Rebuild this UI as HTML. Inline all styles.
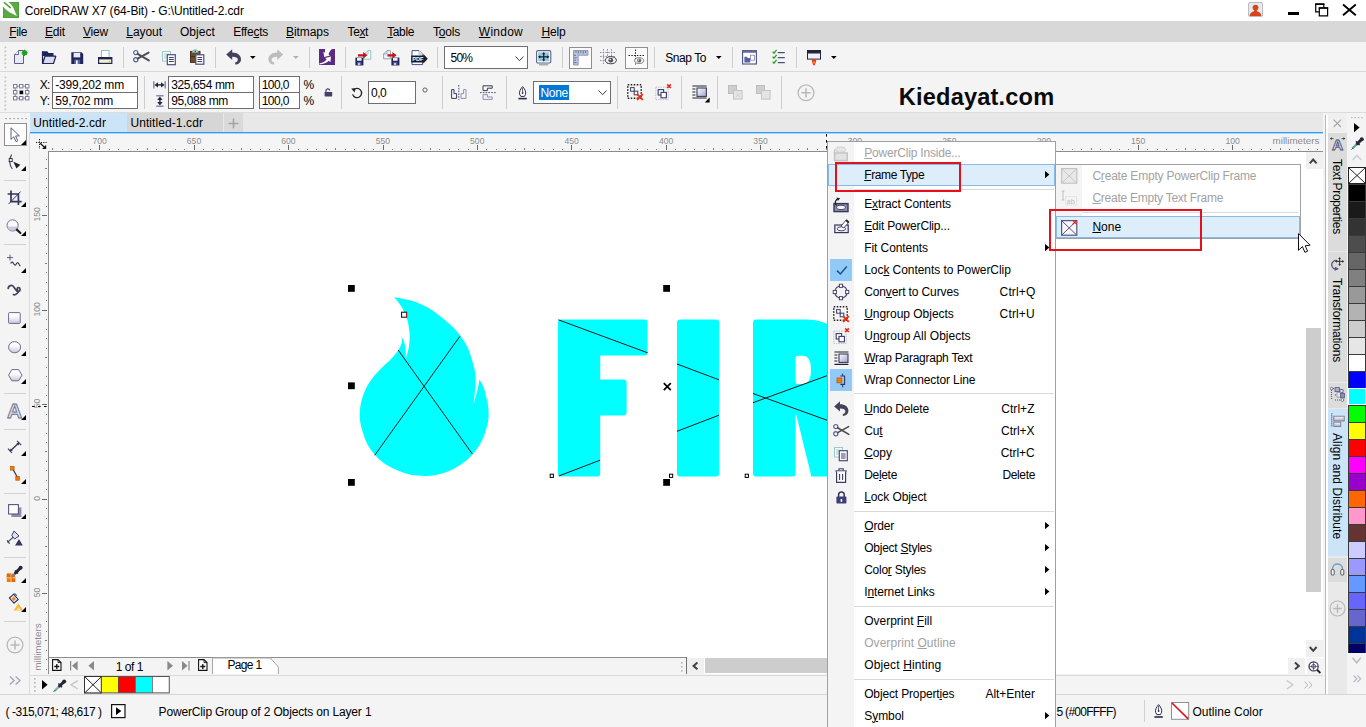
<!DOCTYPE html>
<html><head><meta charset="utf-8"><title>CorelDRAW X7 (64-Bit) - G:\Untitled-2.cdr</title>
<style>
*{box-sizing:border-box;margin:0;padding:0}
html,body{width:1366px;height:727px;overflow:hidden;background:#f4f4f4}
body{font-family:"Liberation Sans",sans-serif;font-size:12px;color:#000;position:relative}
.a{position:absolute;display:block}
.t{position:absolute;white-space:nowrap;line-height:1;display:block}
u{text-decoration:underline;text-underline-offset:1px;text-decoration-thickness:1px}
svg{overflow:visible}
</style></head><body>
<!-- sec_top -->
<div class="a" style="left:0px;top:0px;width:1366px;height:21px;background:#ffffff;"></div>
<svg class="a" style="left:3px;top:2px;" width="16" height="16" viewBox="0 0 16 16"><rect width="16" height="16" fill="#5ca843"/><rect x="0.4" y="0.4" width="15.2" height="15.2" fill="none" stroke="#49a035" stroke-width="0.8"/><path d="M0 0 H5.2 C8 1.6 10.4 5 11.5 8.5 L13.9 13.9 L9 11.6 C5.5 10 2.5 7.6 0 4.6 Z" fill="#fff"/><path d="M1.4 0.6 L7.3 5.6" stroke="#4fa338" stroke-width="1.5" stroke-linecap="round"/></svg>
<span class="t" style="left:24.70px;top:5.00px;font-size:12px;color:#000;letter-spacing:-0.110px;">CorelDRAW X7 (64-Bit) - G:\Untitled-2.cdr</span>
<svg class="a" style="left:1248px;top:2px;" width="15" height="15" viewBox="0 0 15 15"><rect x="0.5" y="0.5" width="14" height="14" rx="1.5" fill="#e9e9ec" stroke="#b9bcc4"/><circle cx="7.5" cy="5.6" r="2.9" fill="#d9451a"/><path d="M1.6 14 C2 10.3 4.6 9.6 6 9.2 L6.3 8 L8.7 8 L9 9.2 C10.4 9.6 13 10.3 13.4 14 Z" fill="#d9451a"/></svg>
<div class="a" style="left:1288px;top:12px;width:11px;height:3px;background:#000;"></div>
<svg class="a" style="left:1314px;top:2px;" width="16" height="16" viewBox="0 0 16 16"><path d="M1.7 2.2 H9.8 V9.8 H1.7 Z" fill="#fff" stroke="#000" stroke-width="1.2"/><rect x="1.1" y="1.4" width="9.3" height="1.6" fill="#000"/><path d="M5.3 6 H13.6 V13.8 H5.3 Z" fill="#fff" stroke="#000" stroke-width="1.2"/><rect x="4.7" y="5.2" width="9.5" height="1.6" fill="#000"/></svg>
<svg class="a" style="left:1341px;top:3px;" width="16" height="14" viewBox="0 0 16 14"><path d="M2 1.5 L14.8 12.2 M14.8 1.5 L2 12.2" stroke="#000" stroke-width="1.9" fill="none"/></svg>
<div class="a" style="left:0px;top:21px;width:1366px;height:21px;background:#d8d8d8;"></div>
<span class="t" style="left:9.20px;top:26.00px;font-size:12px;color:#000;letter-spacing:-0.384px;"><u>F</u>ile</span>
<span class="t" style="left:45.00px;top:26.00px;font-size:12px;color:#000;letter-spacing:-0.220px;"><u>E</u>dit</span>
<span class="t" style="left:83.00px;top:26.00px;font-size:12px;color:#000;letter-spacing:-0.199px;"><u>V</u>iew</span>
<span class="t" style="left:126.30px;top:26.00px;font-size:12px;color:#000;letter-spacing:-0.055px;"><u>L</u>ayout</span>
<span class="t" style="left:180.00px;top:26.00px;font-size:12px;color:#000;letter-spacing:0.020px;">Ob<u>j</u>ect</span>
<span class="t" style="left:233.20px;top:26.00px;font-size:12px;color:#000;letter-spacing:-0.238px;">Effe<u>c</u>ts</span>
<span class="t" style="left:286.00px;top:26.00px;font-size:12px;color:#000;letter-spacing:-0.078px;"><u>B</u>itmaps</span>
<span class="t" style="left:347.60px;top:26.00px;font-size:12px;color:#000;letter-spacing:-0.427px;">Te<u>x</u>t</span>
<span class="t" style="left:387.20px;top:26.00px;font-size:12px;color:#000;letter-spacing:-0.378px;"><u>T</u>able</span>
<span class="t" style="left:433.00px;top:26.00px;font-size:12px;color:#000;letter-spacing:-0.203px;">T<u>o</u>ols</span>
<span class="t" style="left:478.80px;top:26.00px;font-size:12px;color:#000;letter-spacing:0.253px;"><u>W</u>indow</span>
<span class="t" style="left:541.40px;top:26.00px;font-size:12px;color:#000;letter-spacing:-0.145px;"><u>H</u>elp</span>
<!-- sec_bars -->
<div class="a" style="left:0px;top:42px;width:1366px;height:29px;background:#f4f4f4;"></div>
<svg class="a" style="left:4px;top:46px;" width="3" height="23" viewBox="0 0 3 23"><rect x="0.6" y="0.6" width="1.6" height="1.6" fill="#bdbdbd"/><rect x="0" y="0" width="1" height="1" fill="#e6e6e6"/><rect x="0.6" y="4.6" width="1.6" height="1.6" fill="#bdbdbd"/><rect x="0" y="4" width="1" height="1" fill="#e6e6e6"/><rect x="0.6" y="8.6" width="1.6" height="1.6" fill="#bdbdbd"/><rect x="0" y="8" width="1" height="1" fill="#e6e6e6"/><rect x="0.6" y="12.6" width="1.6" height="1.6" fill="#bdbdbd"/><rect x="0" y="12" width="1" height="1" fill="#e6e6e6"/><rect x="0.6" y="16.6" width="1.6" height="1.6" fill="#bdbdbd"/><rect x="0" y="16" width="1" height="1" fill="#e6e6e6"/><rect x="0.6" y="20.6" width="1.6" height="1.6" fill="#bdbdbd"/><rect x="0" y="20" width="1" height="1" fill="#e6e6e6"/></svg>
<svg class="a" style="left:13px;top:49px;" width="16" height="16" viewBox="0 0 16 16"><path d="M1.5 5.5 L5.5 1.5 H10.5 V14.5 H1.5 Z" fill="#e9ebf4" stroke="#5d5f8a" stroke-width="1"/><path d="M1.5 5.5 H5.5 V1.5" fill="#fff" stroke="#4a4d78" stroke-width="0.8"/><circle cx="11.6" cy="3.8" r="2.5" fill="#19a319"/><path d="M11.6 0.6 V7 M8.4 3.8 H14.8 M9.4 1.6 L13.8 6 M13.8 1.6 L9.4 6" stroke="#19a319" stroke-width="1"/></svg>
<svg class="a" style="left:42px;top:50px;" width="15" height="15" viewBox="0 0 15 15"><path d="M0.5 1.2 H5.2 L6.6 3 H11.5 V6 H0.5 Z" fill="#1f2459"/><path d="M0.5 1.2 V13.5 H11.5 L13.8 6.2 H3 L0.8 13" fill="#d9dcec" stroke="#1f2459" stroke-width="1.2" stroke-linejoin="round"/></svg>
<svg class="a" style="left:71px;top:52px;" width="13" height="13" viewBox="0 0 13 13"><path d="M0.3 0.3 H10.6 L12.2 1.9 V12 H0.3 Z" fill="#1f2459"/><rect x="2.6" y="0.9" width="6.6" height="4.5" fill="#e8eaf6"/><rect x="3.2" y="7.6" width="6" height="4.4" fill="#5d63a0"/><rect x="5" y="8.4" width="1.6" height="3.6" fill="#fff"/></svg>
<svg class="a" style="left:98px;top:50px;" width="15" height="15" viewBox="0 0 15 15"><rect x="3.5" y="0.5" width="7.6" height="7" fill="#fff" stroke="#8cc0bd"/><rect x="0.6" y="7.6" width="13.2" height="5.8" fill="#f4f2c9" stroke="#1f2459" stroke-width="1.2"/><rect x="0.6" y="7.2" width="13.2" height="2.2" fill="#1f2459"/><rect x="10.6" y="11" width="1.4" height="1" fill="#e5b800"/></svg>
<div class="a" style="left:123px;top:47px;width:1px;height:21px;background:#cdcdcd;"></div>
<svg class="a" style="left:133px;top:50px;" width="17" height="14" viewBox="0 0 17 14"><circle cx="2.8" cy="2.6" r="2.1" fill="none" stroke="#5a5f98" stroke-width="1.2"/><circle cx="2.8" cy="9.8" r="2.1" fill="none" stroke="#5a5f98" stroke-width="1.2"/><path d="M4.6 3.8 L15.8 10.4 M4.6 8.6 L15.6 2.6" stroke="#4f4f55" stroke-width="2" stroke-linecap="round"/></svg>
<svg class="a" style="left:162px;top:51px;" width="15" height="15" viewBox="0 0 15 15"><rect x="0.5" y="0.5" width="8" height="9.6" fill="#f4fbfa" stroke="#9ccbc6"/><path d="M2 3 H7 M2 5 H7 M2 7 H5" stroke="#9ccbc6" stroke-width="0.9"/><rect x="5.3" y="3.7" width="8" height="10" fill="#fff" stroke="#4d4f7e" stroke-width="1.2"/><path d="M7 6.5 H11.8 M7 8.5 H11.8 M7 10.5 H11.8" stroke="#3b3d66" stroke-width="1"/></svg>
<svg class="a" style="left:190px;top:49px;" width="15" height="16" viewBox="0 0 15 16"><rect x="0.5" y="2.4" width="9.5" height="11" fill="#6b4a2e" stroke="#4a321e"/><rect x="0.5" y="7" width="9.5" height="1" fill="#4a321e"/><path d="M2.2 3.4 C2.2 0 8.2 0 8.2 3.4 Z" fill="#bfe3df" stroke="#5aa8a0" stroke-width="0.8"/><circle cx="5.2" cy="2.2" r="0.7" fill="#333"/><rect x="5.8" y="5.8" width="8" height="9.4" fill="#fff" stroke="#4d4f7e" stroke-width="1.2"/><path d="M7.5 8.5 H12.2 M7.5 10.5 H12.2 M7.5 12.5 H12.2" stroke="#3b3d66" stroke-width="1"/></svg>
<div class="a" style="left:215px;top:47px;width:1px;height:21px;background:#cdcdcd;"></div>
<svg class="a" style="left:225.5px;top:48.6px;" width="16" height="16" viewBox="0 0 16 16"><path d="M0.2 5.6 L6.2 0.2 V3.4 C11.5 3.4 15 6.2 15 10.2 C15 13.4 12.5 15.4 9.2 15.6 V13.6 C11 13.2 11.8 12 11.8 10.6 C11.8 8.6 10 7.8 6.2 7.8 V11 Z" fill="#46415a"/></svg>
<svg class="a" style="left:249.6px;top:56.2px;" width="5.6" height="3" viewBox="0 0 5.6 3"><path d="M0 0 H5.6 L2.8 3 Z" fill="#000"/></svg>
<svg class="a" style="left:268px;top:48.6px;" width="16" height="16" viewBox="0 0 16 16"><g transform="translate(15.4,0) scale(-1,1)"><path d="M0.2 5.6 L6.2 0.2 V3.4 C11.5 3.4 15 6.2 15 10.2 C15 13.4 12.5 15.4 9.2 15.6 V13.6 C11 13.2 11.8 12 11.8 10.6 C11.8 8.6 10 7.8 6.2 7.8 V11 Z" fill="#bdbdbd"/></g></svg>
<svg class="a" style="left:293px;top:56.2px;" width="5.6" height="3" viewBox="0 0 5.6 3"><path d="M0 0 H5.6 L2.8 3 Z" fill="#b0b0b0"/></svg>
<div class="a" style="left:309px;top:47px;width:1px;height:21px;background:#cdcdcd;"></div>
<svg class="a" style="left:319px;top:49px;" width="16" height="16" viewBox="0 0 16 16"><rect width="16" height="16" fill="#5b2b82"/><path d="M6.2 0 H13 C10.6 2.2 9.8 3.8 9.6 5.4 L11 6.6 L5.2 8 L4.4 2.6 L6 3.8 C6 2.4 6 1.2 6.2 0 Z" fill="#fff"/><path d="M0.4 14.4 C4 13.6 6.2 12.2 7.6 10.4 L6.2 9 L12 7.4 L11.4 13.2 L9.8 11.8 C7.6 14 4.4 15.2 0.4 15.6 Z" fill="#fff"/></svg>
<div class="a" style="left:345px;top:47px;width:1px;height:21px;background:#cdcdcd;"></div>
<svg class="a" style="left:354.5px;top:49.5px;" width="17" height="16" viewBox="0 0 17 16"><path d="M9.2 4.2 L13 0.6 H15.8 V9.2 H9.2 Z" fill="#f3faf9" stroke="#8dbdb9" stroke-width="0.9"/><path d="M9.2 4.2 H13 V0.6" fill="none" stroke="#8dbdb9" stroke-width="0.8"/><rect x="0.4" y="7.6" width="8" height="7.8" fill="#1f2459"/><rect x="2" y="8" width="4.6" height="2.8" fill="#e8eaf6"/><rect x="2.2" y="12.2" width="4.2" height="3.2" fill="#5d63a0"/><rect x="3.4" y="12.8" width="1.2" height="2.4" fill="#fff"/><path d="M3 4.2 H8.2 V2 L12.4 5.3 L8.2 8.6 V6.4 H3 Z" fill="#c4111a"/></svg>
<svg class="a" style="left:382.5px;top:49.5px;" width="17" height="16" viewBox="0 0 17 16"><path d="M0.6 4 L4 0.6 H7.4 V8.8 H0.6 Z" fill="#eef4f8" stroke="#8f97ad" stroke-width="0.9"/><path d="M0.6 4 H4 V0.6" fill="none" stroke="#8f97ad" stroke-width="0.8"/><rect x="8.4" y="7.6" width="8" height="7.8" fill="#1f2459"/><rect x="10" y="8" width="4.6" height="2.8" fill="#e8eaf6"/><rect x="10.2" y="12.2" width="4.2" height="3.2" fill="#5d63a0"/><rect x="11.4" y="12.8" width="1.2" height="2.4" fill="#fff"/><path d="M4.4 4.2 H9.4 V2 L13.6 5.3 L9.4 8.6 V6.4 H4.4 Z" fill="#c4111a"/></svg>
<svg class="a" style="left:410.5px;top:49.5px;" width="17" height="16" viewBox="0 0 17 16"><path d="M1 0.6 H8 L11.6 4.2 V14.6 H1 Z" fill="#fff" stroke="#4d4f7e" stroke-width="1"/><path d="M8 0.6 V4.2 H11.6" fill="#dff1ef" stroke="#8dbdb9" stroke-width="0.8"/><path d="M0.2 5.6 H12.4 V4 L16.8 8.8 L12.4 13.6 V12.4 H0.2 Z" fill="#1c1b2e"/><text x="1.2" y="11.2" font-family="Liberation Sans,sans-serif" font-size="6.2" font-weight="bold" fill="#fff" textLength="11.4" lengthAdjust="spacingAndGlyphs">PDF</text></svg>
<div class="a" style="left:437px;top:47px;width:1px;height:21px;background:#cdcdcd;"></div>
<div class="a" style="left:444px;top:46px;width:84px;height:23px;background:#fff;border:1px solid #6e6e6e;"></div>
<span class="t" style="left:450.60px;top:52.00px;font-size:12px;color:#000;letter-spacing:-0.806px;">50%</span>
<svg class="a" style="left:514.6px;top:55.6px;" width="9" height="5.4" viewBox="0 0 9 5.4"><path d="M0.5 0.5 L4.5 4.7 L8.5 0.5" fill="none" stroke="#404040" stroke-width="1"/></svg>
<svg class="a" style="left:536px;top:49.5px;" width="16" height="16" viewBox="0 0 16 16"><rect x="0.6" y="0.6" width="14.2" height="12.4" rx="1.4" fill="#fff" stroke="#5d5f8a" stroke-width="1.1"/><rect x="2.2" y="2.4" width="11" height="8.8" fill="#8ecbd6"/><path d="M7.7 3 V10.6 M3 6.8 H12.4" stroke="#1a1a2e" stroke-width="1.2"/><path d="M7.7 2 L9.3 4.2 H6.1 Z M7.7 11.6 L9.3 9.4 H6.1 Z M2 6.8 L4.2 5.2 V8.4 Z M13.4 6.8 L11.2 5.2 V8.4 Z" fill="#1a1a2e"/><path d="M3 14.8 H12.2" stroke="#8d8fb0" stroke-width="1.1"/></svg>
<div class="a" style="left:562px;top:47px;width:1px;height:21px;background:#cdcdcd;"></div>
<div class="a" style="left:569px;top:47px;width:23px;height:22px;background:#fcfcfc;border:1px solid #8f8f8f;"></div>
<svg class="a" style="left:573px;top:49.5px;" width="16" height="16" viewBox="0 0 16 16"><path d="M0.5 0.5 H15 V5.2 H5.2 V15 H0.5 Z" fill="#b9c2de" stroke="#8a93b5" stroke-width="0.9"/><path d="M3 1 V3 M5.4 1 V3.6 M7.8 1 V3 M10.2 1 V3.6 M12.6 1 V3 M1 5.4 H3 M1 7.8 H3.6 M1 10.2 H3 M1 12.6 H3.6" stroke="#5d668c" stroke-width="0.8"/></svg>
<svg class="a" style="left:600px;top:49px;" width="17" height="17" viewBox="0 0 17 17"><path d="M3.5 0 V15 M7.5 0 V15 M11.5 0 V15 M0 3.5 H15 M0 7.5 H15 M0 11.5 H15" stroke="#8088b8" stroke-width="0.9" stroke-dasharray="1.6 1.1"/><ellipse cx="10.8" cy="11.2" rx="5.6" ry="3.6" fill="#f4f4f4" stroke="#3d3d3d" stroke-width="1"/><circle cx="10.8" cy="11.2" r="2.4" fill="#555"/><circle cx="10.2" cy="10.5" r="0.8" fill="#eee"/></svg>
<div class="a" style="left:625px;top:47px;width:23px;height:22px;background:#fcfcfc;border:1px solid #8f8f8f;"></div>
<svg class="a" style="left:628px;top:49px;" width="18" height="17" viewBox="0 0 18 17"><path d="M7.5 0.5 V15.5" stroke="#222" stroke-width="1" stroke-dasharray="1.5 1.3"/><path d="M0.5 6.5 H16" stroke="#222" stroke-width="1" stroke-dasharray="1.5 1.3"/><ellipse cx="11.2" cy="11.6" rx="4.6" ry="2.9" fill="#eee" stroke="#777" stroke-width="0.9"/><circle cx="11.2" cy="11.6" r="2" fill="#666"/><circle cx="10.7" cy="11" r="0.7" fill="#eee"/></svg>
<div class="a" style="left:654px;top:47px;width:1px;height:21px;background:#cdcdcd;"></div>
<span class="t" style="left:665.30px;top:52.00px;font-size:12px;color:#000;letter-spacing:-0.445px;">Snap To</span>
<svg class="a" style="left:715.8px;top:56.2px;" width="5.6" height="3" viewBox="0 0 5.6 3"><path d="M0 0 H5.6 L2.8 3 Z" fill="#000"/></svg>
<div class="a" style="left:732px;top:47px;width:1px;height:21px;background:#cdcdcd;"></div>
<svg class="a" style="left:742px;top:50px;" width="15" height="15" viewBox="0 0 15 15"><rect x="0.6" y="0.6" width="13.8" height="13.4" fill="#fff" stroke="#4d4f7e" stroke-width="1.1"/><rect x="0.6" y="0.6" width="13.8" height="2.2" fill="#6b6d98"/><path d="M2.4 12.4 V6.8 L5 6.8 L5.6 8 H8.2 V12.4 Z" fill="#5a5fa3"/><rect x="8.6" y="5.2" width="3.8" height="5" fill="#fff" stroke="#7d81b0" stroke-width="0.8"/></svg>
<svg class="a" style="left:771.5px;top:48.5px;" width="14" height="16" viewBox="0 0 14 16"><path d="M0.6 2.6 L2 4.2 L4.6 0.8 M0.6 7.6 L2 9.2 L4.6 5.8 M0.6 12.6 L2 14.2 L4.6 10.8" fill="none" stroke="#2e9e2e" stroke-width="1.3"/><path d="M5.8 3.6 H12.8 M5.8 8.6 H12.8 M5.8 13.6 H12.8" stroke="#4d4f7e" stroke-width="1.1"/></svg>
<div class="a" style="left:796px;top:47px;width:1px;height:21px;background:#cdcdcd;"></div>
<svg class="a" style="left:806.5px;top:49.5px;" width="15" height="16" viewBox="0 0 15 16"><rect x="0.5" y="0.5" width="13" height="8.6" fill="#eef0fa" stroke="#26253a" stroke-width="1"/><rect x="0.5" y="0.5" width="13" height="3" fill="#26253a"/><path d="M4.6 9.4 H9.4 L8.8 12 C8.6 14 7.6 15.2 7 15.6 C6.4 15.2 5.4 14 5.2 12 Z" fill="#e8351e"/><path d="M6 11.4 H8 L7 14.8 Z" fill="#ffb400"/></svg>
<svg class="a" style="left:831px;top:56.2px;" width="5.6" height="3" viewBox="0 0 5.6 3"><path d="M0 0 H5.6 L2.8 3 Z" fill="#000"/></svg>
<div class="a" style="left:0px;top:71px;width:1366px;height:1px;background:#d9d9d9;"></div>
<div class="a" style="left:0px;top:72px;width:1366px;height:40px;background:#f4f4f4;"></div>
<svg class="a" style="left:4px;top:76px;" width="3" height="34" viewBox="0 0 3 34"><rect x="0.6" y="0.6" width="1.6" height="1.6" fill="#bdbdbd"/><rect x="0" y="0" width="1" height="1" fill="#e6e6e6"/><rect x="0.6" y="4.6" width="1.6" height="1.6" fill="#bdbdbd"/><rect x="0" y="4" width="1" height="1" fill="#e6e6e6"/><rect x="0.6" y="8.6" width="1.6" height="1.6" fill="#bdbdbd"/><rect x="0" y="8" width="1" height="1" fill="#e6e6e6"/><rect x="0.6" y="12.6" width="1.6" height="1.6" fill="#bdbdbd"/><rect x="0" y="12" width="1" height="1" fill="#e6e6e6"/><rect x="0.6" y="16.6" width="1.6" height="1.6" fill="#bdbdbd"/><rect x="0" y="16" width="1" height="1" fill="#e6e6e6"/><rect x="0.6" y="20.6" width="1.6" height="1.6" fill="#bdbdbd"/><rect x="0" y="20" width="1" height="1" fill="#e6e6e6"/><rect x="0.6" y="24.6" width="1.6" height="1.6" fill="#bdbdbd"/><rect x="0" y="24" width="1" height="1" fill="#e6e6e6"/><rect x="0.6" y="28.6" width="1.6" height="1.6" fill="#bdbdbd"/><rect x="0" y="28" width="1" height="1" fill="#e6e6e6"/><rect x="0.6" y="32.6" width="1.6" height="1.6" fill="#bdbdbd"/><rect x="0" y="32" width="1" height="1" fill="#e6e6e6"/></svg>
<svg class="a" style="left:13px;top:84px;" width="17" height="17" viewBox="0 0 17 17"><path d="M2.2 2.2 H14.2 V14.2 H2.2 Z" fill="none" stroke="#7a7c9e" stroke-width="0.9"/><rect x="0.5" y="0.5" width="3.4" height="3.4" fill="#fff" stroke="#7a7c9e" stroke-width="1"/><rect x="6.5" y="0.5" width="3.4" height="3.4" fill="#fff" stroke="#7a7c9e" stroke-width="1"/><rect x="12.5" y="0.5" width="3.4" height="3.4" fill="#fff" stroke="#7a7c9e" stroke-width="1"/><rect x="0.5" y="6.5" width="3.4" height="3.4" fill="#fff" stroke="#7a7c9e" stroke-width="1"/><rect x="6.6" y="6.6" width="3.6" height="3.6" fill="#000"/><rect x="12.5" y="6.5" width="3.4" height="3.4" fill="#fff" stroke="#7a7c9e" stroke-width="1"/><rect x="0.5" y="12.5" width="3.4" height="3.4" fill="#fff" stroke="#7a7c9e" stroke-width="1"/><rect x="6.5" y="12.5" width="3.4" height="3.4" fill="#fff" stroke="#7a7c9e" stroke-width="1"/><rect x="12.5" y="12.5" width="3.4" height="3.4" fill="#fff" stroke="#7a7c9e" stroke-width="1"/></svg>
<span class="t" style="left:39.80px;top:79.00px;font-size:12px;color:#000;letter-spacing:-0.819px;">X:</span>
<span class="t" style="left:39.80px;top:95.00px;font-size:12px;color:#000;letter-spacing:-0.488px;">Y:</span>
<div class="a" style="left:52px;top:76px;width:86px;height:17px;background:#fff;border:1px solid #6e6e6e;"></div>
<div class="a" style="left:52px;top:92px;width:86px;height:17px;background:#fff;border:1px solid #6e6e6e;"></div>
<span class="t" style="left:55.30px;top:79.00px;font-size:12px;color:#000;letter-spacing:-0.182px;">-399,202 mm</span>
<span class="t" style="left:55.30px;top:95.00px;font-size:12px;color:#000;letter-spacing:-0.259px;">59,702 mm</span>
<div class="a" style="left:144px;top:76px;width:1px;height:33px;background:#cdcdcd;"></div>
<svg class="a" style="left:153px;top:81px;" width="13" height="8" viewBox="0 0 13 8"><path d="M0.8 0.2 V7.6 M12.2 0.2 V7.6" stroke="#8587c0" stroke-width="1.5"/><path d="M3 3.9 H10" stroke="#26263a" stroke-width="1.4"/><path d="M1.4 3.9 L5 1.2 V6.6 Z M11.6 3.9 L8 1.2 V6.6 Z" fill="#26263a"/></svg>
<svg class="a" style="left:156px;top:95px;" width="8" height="12" viewBox="0 0 8 12"><path d="M0.2 0.8 H7.6 M0.2 11.2 H7.6" stroke="#8587c0" stroke-width="1.5"/><path d="M3.9 3 V9" stroke="#26263a" stroke-width="1.4"/><path d="M3.9 1.4 L1.2 5 H6.6 Z M3.9 10.6 L1.2 7 H6.6 Z" fill="#26263a"/></svg>
<div class="a" style="left:168px;top:76px;width:86px;height:17px;background:#fff;border:1px solid #6e6e6e;"></div>
<div class="a" style="left:168px;top:92px;width:86px;height:17px;background:#fff;border:1px solid #6e6e6e;"></div>
<span class="t" style="left:171.20px;top:79.00px;font-size:12px;color:#000;letter-spacing:-0.370px;">325,654 mm</span>
<span class="t" style="left:171.20px;top:95.00px;font-size:12px;color:#000;letter-spacing:-0.359px;">95,088 mm</span>
<div class="a" style="left:259px;top:76px;width:41px;height:17px;background:#fff;border:1px solid #6e6e6e;"></div>
<div class="a" style="left:259px;top:92px;width:41px;height:17px;background:#fff;border:1px solid #6e6e6e;"></div>
<span class="t" style="left:261.80px;top:79.00px;font-size:12px;color:#000;letter-spacing:-0.606px;">100,0</span>
<span class="t" style="left:261.80px;top:95.00px;font-size:12px;color:#000;letter-spacing:-0.606px;">100,0</span>
<span class="t" style="left:303.60px;top:79.00px;font-size:12px;color:#000;letter-spacing:-1.070px;">%</span>
<span class="t" style="left:303.60px;top:95.00px;font-size:12px;color:#000;letter-spacing:-1.070px;">%</span>
<svg class="a" style="left:324px;top:88px;" width="9" height="9" viewBox="0 0 9 9"><path d="M2 4 V2.6 C2 0.4 5.6 0.4 5.6 2.6" fill="none" stroke="#4a3d6e" stroke-width="1.2"/><rect x="0.6" y="4" width="7.6" height="4.4" rx="0.6" fill="#4a3d6e"/></svg>
<div class="a" style="left:341px;top:76px;width:1px;height:33px;background:#cdcdcd;"></div>
<svg class="a" style="left:351px;top:86.5px;" width="12" height="12" viewBox="0 0 12 12"><path d="M2.2 3.4 A4.6 4.6 0 1 1 1.6 7.4" fill="none" stroke="#222" stroke-width="1.3"/><path d="M0.2 1.6 L4.6 1.2 L3.6 5.4 Z" fill="#222"/></svg>
<div class="a" style="left:368px;top:81px;width:48px;height:23px;background:#fff;border:1px solid #6e6e6e;"></div>
<span class="t" style="left:371.00px;top:87.00px;font-size:12px;color:#000;letter-spacing:-0.494px;">0,0</span>
<svg class="a" style="left:421.5px;top:87px;" width="6" height="6" viewBox="0 0 6 6"><circle cx="3" cy="3" r="2.1" fill="none" stroke="#555" stroke-width="0.9"/></svg>
<div class="a" style="left:442px;top:76px;width:1px;height:33px;background:#cdcdcd;"></div>
<svg class="a" style="left:451px;top:84.5px;" width="16" height="15" viewBox="0 0 16 15"><path d="M7.8 0 V15" stroke="#3a3a5a" stroke-width="0.9" stroke-dasharray="1.6 1.2"/><path d="M0.6 13.4 V4.6 H3 V8.6 H5.6 V13.4 Z" fill="#f4f4f4" stroke="#3a3a5a" stroke-width="1"/><path d="M15 13.4 V4.6 H12.6 V8.6 H10 V13.4 Z" fill="#f4f4f4" stroke="#8d8fb0" stroke-width="1"/></svg>
<svg class="a" style="left:480px;top:84.5px;" width="16" height="15" viewBox="0 0 16 15"><path d="M0 7.6 H15.6" stroke="#3a3a5a" stroke-width="0.9" stroke-dasharray="1.6 1.2"/><path d="M3 5.6 V0.8 H12.2 V3.2 H7.4 V5.6 Z" fill="#f4f4f4" stroke="#3a3a5a" stroke-width="1"/><path d="M3 9.6 V14.4 H12.2 V12 H7.4 V9.6 Z" fill="#f4f4f4" stroke="#8d8fb0" stroke-width="1"/></svg>
<div class="a" style="left:506px;top:76px;width:1px;height:33px;background:#cdcdcd;"></div>
<svg class="a" style="left:517.5px;top:85.5px;" width="10" height="14" viewBox="0 0 10 14"><path d="M4.6 0.6 C2.6 2.8 1 5.6 1.6 8.2 L2.8 10.4 H6.4 L7.6 8.2 C8.2 5.6 6.6 2.8 4.6 0.6 Z" fill="#fff" stroke="#2a2a4a" stroke-width="1"/><path d="M4.6 2 V6.4" stroke="#2a2a4a" stroke-width="0.8"/><circle cx="4.6" cy="7" r="0.9" fill="#2a2a4a"/><path d="M0.4 12.6 H8.8" stroke="#2a2a4a" stroke-width="1.6"/></svg>
<div class="a" style="left:533px;top:81px;width:78px;height:23px;background:#fff;border:1px solid #6e6e6e;"></div>
<div class="a" style="left:539px;top:85px;width:30px;height:15px;background:#0078d7;"></div>
<span class="t" style="left:540.40px;top:87.00px;font-size:12px;color:#fff;letter-spacing:-0.272px;">None</span>
<svg class="a" style="left:597.6px;top:90px;" width="9" height="5.4" viewBox="0 0 9 5.4"><path d="M0.5 0.5 L4.5 4.7 L8.5 0.5" fill="none" stroke="#404040" stroke-width="1"/></svg>
<div class="a" style="left:617px;top:76px;width:1px;height:33px;background:#cdcdcd;"></div>
<svg class="a" style="left:627px;top:83.5px;" width="17" height="17" viewBox="0 0 17 17"><rect x="0.75" y="0.75" width="13.5" height="13.5" fill="none" stroke="#1c1c1c" stroke-width="1.5" stroke-dasharray="1.5 1.5"/><rect x="3.6" y="3.6" width="3.6" height="3.6" fill="#fff" stroke="#3b3d66" stroke-width="1"/><rect x="7.2" y="7.2" width="3.6" height="3.6" fill="#fff" stroke="#3b3d66" stroke-width="1"/><path d="M10 10.2 L15.8 15.8 M15.8 10.2 L10 15.8" stroke="#f0260a" stroke-width="1.8"/></svg>
<svg class="a" style="left:655px;top:83.5px;" width="17" height="17" viewBox="0 0 17 17"><rect x="0.8" y="3.2" width="12.4" height="12.4" fill="none" stroke="#b5b8d0" stroke-width="0.9" stroke-dasharray="1.4 1"/><rect x="3.2" y="5.6" width="5.4" height="5.4" fill="#fff" stroke="#3b3d66" stroke-width="1.1"/><rect x="6" y="8.4" width="5.4" height="5.4" fill="#fff" stroke="#3b3d66" stroke-width="1.1"/><path d="M12.2 0.4 L15.8 4 M15.8 0.4 L12.2 4" stroke="#e8220f" stroke-width="1.5"/></svg>
<div class="a" style="left:681px;top:76px;width:1px;height:33px;background:#cdcdcd;"></div>
<svg class="a" style="left:691.5px;top:84.5px;" width="18" height="18" viewBox="0 0 18 18"><defs><linearGradient id="wg" x1="0" y1="0" x2="1" y2="1"><stop offset="0" stop-color="#fff"/><stop offset="1" stop-color="#9fa3c8"/></linearGradient></defs><path d="M0.4 1 H14.6 M0.4 4 H3.4 M0.4 7 H3.4 M0.4 10 H3.4 M0.4 13 H14.6" stroke="#222" stroke-width="1.1"/><rect x="5" y="3" width="9.4" height="8.4" fill="url(#wg)" stroke="#3b3d66" stroke-width="1.1"/><path d="M17.6 12.6 V17.4 H12.8 Z" fill="#000"/></svg>
<div class="a" style="left:717px;top:76px;width:1px;height:33px;background:#cdcdcd;"></div>
<svg class="a" style="left:727.5px;top:84.5px;" width="15" height="15" viewBox="0 0 15 15"><rect x="0.5" y="0.5" width="8" height="8" fill="#cfcfcf" stroke="#bdbdbd"/><rect x="5.5" y="5.5" width="8.6" height="8.6" fill="#e4e4e4" stroke="#c4c4c4"/><path d="M8 8 L12 12 M12 8 L8 12" stroke="#cfcfcf" stroke-width="0.8"/></svg>
<svg class="a" style="left:755.5px;top:84.5px;" width="15" height="15" viewBox="0 0 15 15"><rect x="0.5" y="0.5" width="8" height="8" fill="#cfcfcf" stroke="#bdbdbd"/><rect x="5.5" y="5.5" width="8.6" height="8.6" fill="#e4e4e4" stroke="#c4c4c4"/></svg>
<div class="a" style="left:781px;top:76px;width:1px;height:33px;background:#cdcdcd;"></div>
<svg class="a" style="left:797px;top:84px;" width="18" height="18" viewBox="0 0 18 18"><circle cx="9" cy="8.8" r="7.9" fill="none" stroke="#b8b8b8" stroke-width="1.3"/><path d="M9 4.2 V13.4 M4.4 8.8 H13.6" stroke="#b8b8b8" stroke-width="1.5"/></svg>
<span class="t" style="left:898.80px;top:86.00px;font-size:23.6px;color:#0a0a0a;font-weight:bold;letter-spacing:0.178px;">Kiedayat.com</span>
<!-- sec_work -->
<div class="a" style="left:0px;top:112px;width:1366px;height:1px;background:#dcdcdc;"></div>
<div class="a" style="left:0px;top:113px;width:1366px;height:20px;background:#e8e8e8;"></div>
<div class="a" style="left:30px;top:113px;width:96.5px;height:20px;background:#cce4f7;"></div>
<div class="a" style="left:126.5px;top:113px;width:96px;height:20px;background:#d6d6d6;"></div>
<div class="a" style="left:223.6px;top:113px;width:19.6px;height:20px;background:#dadada;"></div>
<span class="t" style="left:33.20px;top:117.00px;font-size:12px;color:#000;letter-spacing:0.103px;">Untitled-2.cdr</span>
<span class="t" style="left:130.40px;top:117.00px;font-size:12px;color:#000;letter-spacing:0.088px;">Untitled-1.cdr</span>
<svg class="a" style="left:228px;top:117.5px;" width="11" height="11" viewBox="0 0 11 11"><path d="M5.5 0.5 V10.5 M0.5 5.5 H10.5" stroke="#a3a3a3" stroke-width="1.6"/></svg>
<svg class="a" style="left:1331.5px;top:119px;" width="10" height="10" viewBox="0 0 10 10"><path d="M1 1 L8.6 8.6 M8.6 1 L1 8.6" stroke="#9a9a9a" stroke-width="1.2"/></svg>
<div class="a" style="left:0px;top:113px;width:30px;height:583px;background:#f4f4f4;"></div>
<svg class="a" style="left:5px;top:117.5px;" width="24" height="3" viewBox="0 0 24 3"><rect x="0" y="0" width="2" height="1" fill="#b0b0b0"/><rect x="1" y="1" width="1" height="1" fill="#e0e0e0"/><rect x="4" y="0" width="2" height="1" fill="#b0b0b0"/><rect x="5" y="1" width="1" height="1" fill="#e0e0e0"/><rect x="8" y="0" width="2" height="1" fill="#b0b0b0"/><rect x="9" y="1" width="1" height="1" fill="#e0e0e0"/><rect x="12" y="0" width="2" height="1" fill="#b0b0b0"/><rect x="13" y="1" width="1" height="1" fill="#e0e0e0"/><rect x="16" y="0" width="2" height="1" fill="#b0b0b0"/><rect x="17" y="1" width="1" height="1" fill="#e0e0e0"/><rect x="20" y="0" width="2" height="1" fill="#b0b0b0"/><rect x="21" y="1" width="1" height="1" fill="#e0e0e0"/></svg>
<div class="a" style="left:4px;top:123px;width:23px;height:23px;background:#fdfdfd;border:1px solid #8f8f8f;"></div>
<svg class="a" style="left:10px;top:126.5px;" width="12" height="16" viewBox="0 0 12 16"><path d="M1 0.8 L1 12.4 L3.8 9.8 L6 14.6 L7.8 13.8 L5.6 9 L9.4 8.8 Z" fill="#fff" stroke="#4d4f76" stroke-width="0.9" stroke-linejoin="round"/></svg>
<svg class="a" style="left:20.5px;top:139.5px;" width="5" height="5" viewBox="0 0 5 5"><path d="M5 0 V5 H0 Z" fill="#000"/></svg>
<svg class="a" style="left:7px;top:154px;" width="18" height="18" viewBox="0 0 18 18"><path d="M4.6 0.6 C2 5 2 11 5.4 15" fill="none" stroke="#3b3d66" stroke-width="1.1"/><rect x="2.2" y="4.6" width="3" height="3" fill="#fff" stroke="#222" stroke-width="0.9"/><path d="M6.4 7.8 L13.4 10.8 L9.4 14.6 Z" fill="#222"/></svg>
<svg class="a" style="left:20.5px;top:166px;" width="5" height="5" viewBox="0 0 5 5"><path d="M5 0 V5 H0 Z" fill="#000"/></svg>
<div class="a" style="left:4px;top:180px;width:22px;height:1px;background:#d2d2d2;"></div>
<svg class="a" style="left:7px;top:190px;" width="16" height="17" viewBox="0 0 16 17"><path d="M4 0.6 V11.6 H14.6 M0.6 4 H11.4 V15" fill="none" stroke="#34365c" stroke-width="1.7"/><path d="M1.6 14 L13.6 1.6" stroke="#34365c" stroke-width="1"/></svg>
<svg class="a" style="left:20.5px;top:202px;" width="5" height="5" viewBox="0 0 5 5"><path d="M5 0 V5 H0 Z" fill="#000"/></svg>
<svg class="a" style="left:6px;top:219px;" width="19" height="18" viewBox="0 0 19 18"><circle cx="6.6" cy="6.4" r="5.6" fill="#fbfbfd" stroke="#6b6d8a" stroke-width="1"/><path d="M1.6 7.4 A5.1 5.1 0 0 0 11.6 7.4 Z" fill="#c9cbe0"/><path d="M10.8 10.6 L14.4 14" stroke="#222" stroke-width="2.2" stroke-linecap="round"/></svg>
<svg class="a" style="left:20.5px;top:231px;" width="5" height="5" viewBox="0 0 5 5"><path d="M5 0 V5 H0 Z" fill="#000"/></svg>
<div class="a" style="left:4px;top:244px;width:22px;height:1px;background:#d2d2d2;"></div>
<svg class="a" style="left:6px;top:254px;" width="19" height="18" viewBox="0 0 19 18"><path d="M4 0.6 V6.6 M1 3.6 H7" stroke="#4d4f76" stroke-width="0.9"/><path d="M4.6 9.4 C5.6 7.6 6.8 7.8 7.6 9.6 C8.4 11.6 9.6 11.6 10.4 9.8 C11.2 8.2 12.4 8.6 13.2 10.4 L14.2 12.2" fill="none" stroke="#333" stroke-width="1.1"/></svg>
<svg class="a" style="left:20.5px;top:268px;" width="5" height="5" viewBox="0 0 5 5"><path d="M5 0 V5 H0 Z" fill="#000"/></svg>
<svg class="a" style="left:7px;top:283px;" width="16" height="14" viewBox="0 0 16 14"><path d="M1.2 5.4 C1.4 2.2 5 1.4 7 4.2 C8.6 6.6 9.4 8.8 11.6 8.4 C13.6 8 13.6 4.8 11.6 4.6 C10.2 4.5 9.8 5.8 10.6 6.6" fill="none" stroke="#46415a" stroke-width="1.7" stroke-linecap="round"/><path d="M11.6 8.4 C10 11.4 7.6 12.2 6.4 11.6" fill="none" stroke="#46415a" stroke-width="1.7" stroke-linecap="round"/></svg>
<svg class="a" style="left:8px;top:311.5px;" width="14" height="13" viewBox="0 0 14 13"><defs><linearGradient id="rg" x1="0" y1="0" x2="0" y2="1"><stop offset="0.35" stop-color="#fff"/><stop offset="1" stop-color="#c3c6de"/></linearGradient></defs><rect x="0.6" y="0.6" width="11.6" height="10.8" rx="0.8" fill="url(#rg)" stroke="#6b6d8a" stroke-width="1"/></svg>
<svg class="a" style="left:20.5px;top:323px;" width="5" height="5" viewBox="0 0 5 5"><path d="M5 0 V5 H0 Z" fill="#000"/></svg>
<svg class="a" style="left:8px;top:340.5px;" width="14" height="13" viewBox="0 0 14 13"><defs><linearGradient id="eg" x1="0" y1="0" x2="0" y2="1"><stop offset="0.35" stop-color="#fff"/><stop offset="1" stop-color="#c3c6de"/></linearGradient></defs><ellipse cx="6.6" cy="6.2" rx="6" ry="5.6" fill="url(#eg)" stroke="#6b6d8a" stroke-width="1"/></svg>
<svg class="a" style="left:20.5px;top:351px;" width="5" height="5" viewBox="0 0 5 5"><path d="M5 0 V5 H0 Z" fill="#000"/></svg>
<svg class="a" style="left:7.5px;top:369px;" width="15" height="13" viewBox="0 0 15 13"><path d="M3.8 0.6 H10.6 L14 6.2 L10.6 11.8 H3.8 L0.6 6.2 Z" fill="url(#eg)" stroke="#6b6d8a" stroke-width="1"/></svg>
<svg class="a" style="left:20.5px;top:379px;" width="5" height="5" viewBox="0 0 5 5"><path d="M5 0 V5 H0 Z" fill="#000"/></svg>
<div class="a" style="left:4px;top:392.5px;width:22px;height:1px;background:#d2d2d2;"></div>
<svg class="a" style="left:6px;top:401px;" width="19" height="19" viewBox="0 0 19 19"><text x="8.6" y="16.6" text-anchor="middle" font-family="Liberation Sans,sans-serif" font-weight="bold" font-size="21" fill="#dcdeee" stroke="#6b6d8a" stroke-width="0.9">A</text></svg>
<svg class="a" style="left:20.5px;top:414.5px;" width="5" height="5" viewBox="0 0 5 5"><path d="M5 0 V5 H0 Z" fill="#000"/></svg>
<div class="a" style="left:4px;top:428.5px;width:22px;height:1px;background:#d2d2d2;"></div>
<svg class="a" style="left:7px;top:438.5px;" width="16" height="16" viewBox="0 0 16 16"><path d="M3 12.2 L12 3.8" stroke="#34365c" stroke-width="1.3"/><path d="M1 9.6 L5 14 M10 1.8 L14.2 6.2" stroke="#34365c" stroke-width="1.1"/><path d="M2.6 12.6 L3.6 9.6 L5.8 11.8 Z M12.4 3.4 L9.4 4.4 L11.6 6.6 Z" fill="#34365c"/></svg>
<svg class="a" style="left:20.5px;top:451px;" width="5" height="5" viewBox="0 0 5 5"><path d="M5 0 V5 H0 Z" fill="#000"/></svg>
<svg class="a" style="left:9.6px;top:466px;" width="12" height="16" viewBox="0 0 12 16"><path d="M2.4 2.4 L8 12.2" stroke="#34365c" stroke-width="1.2"/><rect x="0.5" y="0.5" width="3.6" height="3.6" fill="#f47b00" stroke="#b85500" stroke-width="0.7"/><rect x="5.8" y="10.6" width="3.6" height="3.6" fill="#f47b00" stroke="#b85500" stroke-width="0.7"/></svg>
<svg class="a" style="left:20.5px;top:479px;" width="5" height="5" viewBox="0 0 5 5"><path d="M5 0 V5 H0 Z" fill="#000"/></svg>
<div class="a" style="left:4px;top:492.5px;width:22px;height:1px;background:#d2d2d2;"></div>
<svg class="a" style="left:7.5px;top:503.5px;" width="15" height="14" viewBox="0 0 15 14"><rect x="3.4" y="3.4" width="10" height="9.6" fill="#8d8fa8"/><rect x="0.6" y="0.6" width="9.8" height="9.4" fill="#fff" stroke="#55577c" stroke-width="1.1"/></svg>
<svg class="a" style="left:20.5px;top:514px;" width="5" height="5" viewBox="0 0 5 5"><path d="M5 0 V5 H0 Z" fill="#000"/></svg>
<svg class="a" style="left:6px;top:530px;" width="18" height="17" viewBox="0 0 18 17"><path d="M8 1 L13 6 L8.6 9 L5.8 5.6 Z" fill="#dfe1f0" stroke="#3b3d66" stroke-width="1"/><path d="M7 7.4 L1.4 12.4 M1 10.4 L3.6 13.6" stroke="#3b3d66" stroke-width="1.2"/><path d="M9 15.4 L13 9 L16.8 15.4 Z" fill="#34365c"/></svg>
<div class="a" style="left:4px;top:556.5px;width:22px;height:1px;background:#d2d2d2;"></div>
<svg class="a" style="left:6px;top:564px;" width="19" height="19" viewBox="0 0 19 19"><rect x="0.8" y="9.6" width="8.4" height="8.4" fill="#f47b00"/><rect x="0.8" y="9.6" width="4.2" height="4.2" fill="#e86a00"/><rect x="5" y="13.8" width="4.2" height="4.2" fill="#e86a00"/><path d="M5 9.6 V18 M0.8 13.8 H9.2" stroke="#ffd2a0" stroke-width="0.8"/><path d="M5.4 13.2 L10.6 7.8" stroke="#7d7f98" stroke-width="2"/><path d="M9.6 8.8 L13.6 4.8" stroke="#26253a" stroke-width="3" stroke-linecap="round"/><path d="M8.8 6.4 L12 9.6" stroke="#26253a" stroke-width="1.4"/><circle cx="14.6" cy="3.8" r="2" fill="#26253a"/></svg>
<svg class="a" style="left:20.5px;top:577.5px;" width="5" height="5" viewBox="0 0 5 5"><path d="M5 0 V5 H0 Z" fill="#000"/></svg>
<svg class="a" style="left:7px;top:593px;" width="18" height="19" viewBox="0 0 18 19"><path d="M2.4 5 L6.6 1.2 L11.2 6.4 L7 10.2 Z" fill="#e4e6f4" stroke="#2f3158" stroke-width="1.1"/><path d="M4.6 5.4 L6.8 3.4 L9 6 L6.8 8 Z" fill="#f08a1c"/><path d="M6.6 1.2 C8.6 0.2 10 1.6 9 3.4" fill="none" stroke="#2f3158" stroke-width="0.9"/><path d="M6.6 17.6 L11.4 10.4 L16.2 17.6 Z" fill="#ffb629"/><path d="M9 17.6 L11.4 14 L13.8 17.6 Z" fill="#ffe0a0"/></svg>
<svg class="a" style="left:20.5px;top:606.5px;" width="5" height="5" viewBox="0 0 5 5"><path d="M5 0 V5 H0 Z" fill="#000"/></svg>
<div class="a" style="left:4px;top:620.5px;width:22px;height:1px;background:#d2d2d2;"></div>
<svg class="a" style="left:6px;top:636px;" width="18" height="18" viewBox="0 0 18 18"><circle cx="9" cy="9" r="7.9" fill="none" stroke="#b8b8b8" stroke-width="1.3"/><path d="M9 4.4 V13.6 M4.4 9 H13.6" stroke="#b8b8b8" stroke-width="1.5"/></svg>
<svg class="a" style="left:9px;top:676px;" width="12.4" height="9.4" viewBox="0 0 12.4 9.4"><path d="M0.8 0.6 L5.2 4.6 L0.8 8.6 M6.6 0.6 L11 4.6 L6.6 8.6" fill="none" stroke="#a2a8b6" stroke-width="1.4"/></svg>
<div class="a" style="left:30px;top:133px;width:1293px;height:18px;background:#f5f5f5;"></div>
<div class="a" style="left:30px;top:151px;width:18px;height:524px;background:#f5f5f5;"></div>
<div class="a" style="left:29px;top:133px;width:1px;height:562px;background:#dcdcdc;"></div>
<div class="a" style="left:30px;top:132px;width:1293px;height:1px;background:#2a9df4;"></div>
<div class="a" style="left:30px;top:133px;width:1293px;height:1px;background:#a9d6f8;"></div>
<svg class="a" style="left:36px;top:138.5px;" width="11" height="10.5" viewBox="0 0 11 10.5"><path d="M3.5 0 V10 M0 3.5 H10.6" stroke="#111" stroke-width="1" stroke-dasharray="1.2 1.2"/><path d="M4.2 4.2 L9.6 9.4" stroke="#111" stroke-width="1.3"/><path d="M10.2 10 V5.8 L6 10 Z" fill="#111"/></svg>
<svg class="a" style="left:30px;top:133px;overflow:hidden;" width="1293" height="18" viewBox="0 0 1293 18"><text x="69.60" y="11" text-anchor="middle" font-family="Liberation Sans,sans-serif" font-size="8.6" fill="#8c8c8c">700</text><rect x="69" y="12" width="1" height="5" fill="#6a6a6a"/><text x="164.02" y="11" text-anchor="middle" font-family="Liberation Sans,sans-serif" font-size="8.6" fill="#8c8c8c">650</text><rect x="164" y="12" width="1" height="5" fill="#6a6a6a"/><text x="258.44" y="11" text-anchor="middle" font-family="Liberation Sans,sans-serif" font-size="8.6" fill="#8c8c8c">600</text><rect x="258" y="12" width="1" height="5" fill="#6a6a6a"/><text x="352.86" y="11" text-anchor="middle" font-family="Liberation Sans,sans-serif" font-size="8.6" fill="#8c8c8c">550</text><rect x="353" y="12" width="1" height="5" fill="#6a6a6a"/><text x="447.28" y="11" text-anchor="middle" font-family="Liberation Sans,sans-serif" font-size="8.6" fill="#8c8c8c">500</text><rect x="447" y="12" width="1" height="5" fill="#6a6a6a"/><text x="541.70" y="11" text-anchor="middle" font-family="Liberation Sans,sans-serif" font-size="8.6" fill="#8c8c8c">450</text><rect x="541" y="12" width="1" height="5" fill="#6a6a6a"/><text x="636.12" y="11" text-anchor="middle" font-family="Liberation Sans,sans-serif" font-size="8.6" fill="#8c8c8c">400</text><rect x="636" y="12" width="1" height="5" fill="#6a6a6a"/><text x="730.54" y="11" text-anchor="middle" font-family="Liberation Sans,sans-serif" font-size="8.6" fill="#8c8c8c">350</text><rect x="730" y="12" width="1" height="5" fill="#6a6a6a"/><text x="824.96" y="11" text-anchor="middle" font-family="Liberation Sans,sans-serif" font-size="8.6" fill="#8c8c8c">300</text><rect x="825" y="12" width="1" height="5" fill="#6a6a6a"/><text x="919.38" y="11" text-anchor="middle" font-family="Liberation Sans,sans-serif" font-size="8.6" fill="#8c8c8c">250</text><rect x="919" y="12" width="1" height="5" fill="#6a6a6a"/><text x="1013.80" y="11" text-anchor="middle" font-family="Liberation Sans,sans-serif" font-size="8.6" fill="#8c8c8c">200</text><rect x="1014" y="12" width="1" height="5" fill="#6a6a6a"/><text x="1108.22" y="11" text-anchor="middle" font-family="Liberation Sans,sans-serif" font-size="8.6" fill="#8c8c8c">150</text><rect x="1108" y="12" width="1" height="5" fill="#6a6a6a"/><text x="1202.64" y="11" text-anchor="middle" font-family="Liberation Sans,sans-serif" font-size="8.6" fill="#8c8c8c">100</text><rect x="1202" y="12" width="1" height="5" fill="#6a6a6a"/><rect x="22" y="15" width="1" height="2" fill="#7a7a7a"/><rect x="32" y="16" width="1" height="1" fill="#808080"/><rect x="41" y="16" width="1" height="1" fill="#808080"/><rect x="50" y="16" width="1" height="1" fill="#808080"/><rect x="60" y="16" width="1" height="1" fill="#808080"/><rect x="79" y="16" width="1" height="1" fill="#808080"/><rect x="88" y="16" width="1" height="1" fill="#808080"/><rect x="98" y="16" width="1" height="1" fill="#808080"/><rect x="107" y="16" width="1" height="1" fill="#808080"/><rect x="117" y="15" width="1" height="2" fill="#7a7a7a"/><rect x="126" y="16" width="1" height="1" fill="#808080"/><rect x="135" y="16" width="1" height="1" fill="#808080"/><rect x="145" y="16" width="1" height="1" fill="#808080"/><rect x="154" y="16" width="1" height="1" fill="#808080"/><rect x="173" y="16" width="1" height="1" fill="#808080"/><rect x="183" y="16" width="1" height="1" fill="#808080"/><rect x="192" y="16" width="1" height="1" fill="#808080"/><rect x="201" y="16" width="1" height="1" fill="#808080"/><rect x="211" y="15" width="1" height="2" fill="#7a7a7a"/><rect x="220" y="16" width="1" height="1" fill="#808080"/><rect x="230" y="16" width="1" height="1" fill="#808080"/><rect x="239" y="16" width="1" height="1" fill="#808080"/><rect x="249" y="16" width="1" height="1" fill="#808080"/><rect x="268" y="16" width="1" height="1" fill="#808080"/><rect x="277" y="16" width="1" height="1" fill="#808080"/><rect x="286" y="16" width="1" height="1" fill="#808080"/><rect x="296" y="16" width="1" height="1" fill="#808080"/><rect x="305" y="15" width="1" height="2" fill="#7a7a7a"/><rect x="315" y="16" width="1" height="1" fill="#808080"/><rect x="324" y="16" width="1" height="1" fill="#808080"/><rect x="334" y="16" width="1" height="1" fill="#808080"/><rect x="343" y="16" width="1" height="1" fill="#808080"/><rect x="362" y="16" width="1" height="1" fill="#808080"/><rect x="371" y="16" width="1" height="1" fill="#808080"/><rect x="381" y="16" width="1" height="1" fill="#808080"/><rect x="390" y="16" width="1" height="1" fill="#808080"/><rect x="400" y="15" width="1" height="2" fill="#7a7a7a"/><rect x="409" y="16" width="1" height="1" fill="#808080"/><rect x="419" y="16" width="1" height="1" fill="#808080"/><rect x="428" y="16" width="1" height="1" fill="#808080"/><rect x="438" y="16" width="1" height="1" fill="#808080"/><rect x="456" y="16" width="1" height="1" fill="#808080"/><rect x="466" y="16" width="1" height="1" fill="#808080"/><rect x="475" y="16" width="1" height="1" fill="#808080"/><rect x="485" y="16" width="1" height="1" fill="#808080"/><rect x="494" y="15" width="1" height="2" fill="#7a7a7a"/><rect x="504" y="16" width="1" height="1" fill="#808080"/><rect x="513" y="16" width="1" height="1" fill="#808080"/><rect x="523" y="16" width="1" height="1" fill="#808080"/><rect x="532" y="16" width="1" height="1" fill="#808080"/><rect x="551" y="16" width="1" height="1" fill="#808080"/><rect x="560" y="16" width="1" height="1" fill="#808080"/><rect x="570" y="16" width="1" height="1" fill="#808080"/><rect x="579" y="16" width="1" height="1" fill="#808080"/><rect x="589" y="15" width="1" height="2" fill="#7a7a7a"/><rect x="598" y="16" width="1" height="1" fill="#808080"/><rect x="607" y="16" width="1" height="1" fill="#808080"/><rect x="617" y="16" width="1" height="1" fill="#808080"/><rect x="626" y="16" width="1" height="1" fill="#808080"/><rect x="645" y="16" width="1" height="1" fill="#808080"/><rect x="655" y="16" width="1" height="1" fill="#808080"/><rect x="664" y="16" width="1" height="1" fill="#808080"/><rect x="674" y="16" width="1" height="1" fill="#808080"/><rect x="683" y="15" width="1" height="2" fill="#7a7a7a"/><rect x="692" y="16" width="1" height="1" fill="#808080"/><rect x="702" y="16" width="1" height="1" fill="#808080"/><rect x="711" y="16" width="1" height="1" fill="#808080"/><rect x="721" y="16" width="1" height="1" fill="#808080"/><rect x="740" y="16" width="1" height="1" fill="#808080"/><rect x="749" y="16" width="1" height="1" fill="#808080"/><rect x="759" y="16" width="1" height="1" fill="#808080"/><rect x="768" y="16" width="1" height="1" fill="#808080"/><rect x="777" y="15" width="1" height="2" fill="#7a7a7a"/><rect x="787" y="16" width="1" height="1" fill="#808080"/><rect x="796" y="16" width="1" height="1" fill="#808080"/><rect x="806" y="16" width="1" height="1" fill="#808080"/><rect x="815" y="16" width="1" height="1" fill="#808080"/><rect x="834" y="16" width="1" height="1" fill="#808080"/><rect x="844" y="16" width="1" height="1" fill="#808080"/><rect x="853" y="16" width="1" height="1" fill="#808080"/><rect x="862" y="16" width="1" height="1" fill="#808080"/><rect x="872" y="15" width="1" height="2" fill="#7a7a7a"/><rect x="881" y="16" width="1" height="1" fill="#808080"/><rect x="891" y="16" width="1" height="1" fill="#808080"/><rect x="900" y="16" width="1" height="1" fill="#808080"/><rect x="910" y="16" width="1" height="1" fill="#808080"/><rect x="929" y="16" width="1" height="1" fill="#808080"/><rect x="938" y="16" width="1" height="1" fill="#808080"/><rect x="947" y="16" width="1" height="1" fill="#808080"/><rect x="957" y="16" width="1" height="1" fill="#808080"/><rect x="966" y="15" width="1" height="2" fill="#7a7a7a"/><rect x="976" y="16" width="1" height="1" fill="#808080"/><rect x="985" y="16" width="1" height="1" fill="#808080"/><rect x="995" y="16" width="1" height="1" fill="#808080"/><rect x="1004" y="16" width="1" height="1" fill="#808080"/><rect x="1023" y="16" width="1" height="1" fill="#808080"/><rect x="1032" y="16" width="1" height="1" fill="#808080"/><rect x="1042" y="16" width="1" height="1" fill="#808080"/><rect x="1051" y="16" width="1" height="1" fill="#808080"/><rect x="1061" y="15" width="1" height="2" fill="#7a7a7a"/><rect x="1070" y="16" width="1" height="1" fill="#808080"/><rect x="1080" y="16" width="1" height="1" fill="#808080"/><rect x="1089" y="16" width="1" height="1" fill="#808080"/><rect x="1098" y="16" width="1" height="1" fill="#808080"/><rect x="1117" y="16" width="1" height="1" fill="#808080"/><rect x="1127" y="16" width="1" height="1" fill="#808080"/><rect x="1136" y="16" width="1" height="1" fill="#808080"/><rect x="1146" y="16" width="1" height="1" fill="#808080"/><rect x="1155" y="15" width="1" height="2" fill="#7a7a7a"/><rect x="1165" y="16" width="1" height="1" fill="#808080"/><rect x="1174" y="16" width="1" height="1" fill="#808080"/><rect x="1183" y="16" width="1" height="1" fill="#808080"/><rect x="1193" y="16" width="1" height="1" fill="#808080"/><rect x="1212" y="16" width="1" height="1" fill="#808080"/><rect x="1221" y="16" width="1" height="1" fill="#808080"/><rect x="1231" y="16" width="1" height="1" fill="#808080"/><rect x="1240" y="16" width="1" height="1" fill="#808080"/><rect x="1250" y="15" width="1" height="2" fill="#7a7a7a"/><rect x="1259" y="16" width="1" height="1" fill="#808080"/><rect x="1268" y="16" width="1" height="1" fill="#808080"/><rect x="1278" y="16" width="1" height="1" fill="#808080"/><rect x="1287" y="16" width="1" height="1" fill="#808080"/><text x="1289.4" y="11" text-anchor="end" font-family="Liberation Sans,sans-serif" font-size="9.6" fill="#8c8c8c" textLength="46.8" lengthAdjust="spacingAndGlyphs">millimeters</text><path d="M796.5 1 V17" stroke="#000" stroke-width="1" stroke-dasharray="2.6 3.4"/></svg>
<svg class="a" style="left:30px;top:151px;overflow:hidden;" width="18" height="524" viewBox="0 0 18 524"><rect x="16" y="518" width="1" height="1" fill="#808080"/><rect x="16" y="508" width="1" height="1" fill="#808080"/><rect x="16" y="499" width="1" height="1" fill="#808080"/><rect x="15" y="489" width="2" height="1" fill="#7a7a7a"/><rect x="16" y="480" width="1" height="1" fill="#808080"/><rect x="16" y="470" width="1" height="1" fill="#808080"/><rect x="16" y="461" width="1" height="1" fill="#808080"/><rect x="16" y="452" width="1" height="1" fill="#808080"/><rect x="12" y="442" width="5" height="1" fill="#6a6a6a"/><text transform="translate(10.4,441.40) rotate(-90)" text-anchor="middle" font-family="Liberation Sans,sans-serif" font-size="8.6" fill="#8c8c8c">50</text><rect x="16" y="433" width="1" height="1" fill="#808080"/><rect x="16" y="423" width="1" height="1" fill="#808080"/><rect x="16" y="414" width="1" height="1" fill="#808080"/><rect x="16" y="404" width="1" height="1" fill="#808080"/><rect x="15" y="395" width="2" height="1" fill="#7a7a7a"/><rect x="16" y="385" width="1" height="1" fill="#808080"/><rect x="16" y="376" width="1" height="1" fill="#808080"/><rect x="16" y="367" width="1" height="1" fill="#808080"/><rect x="16" y="357" width="1" height="1" fill="#808080"/><rect x="12" y="348" width="5" height="1" fill="#6a6a6a"/><text transform="translate(10.4,347.40) rotate(-90)" text-anchor="middle" font-family="Liberation Sans,sans-serif" font-size="8.6" fill="#8c8c8c">0</text><rect x="16" y="338" width="1" height="1" fill="#808080"/><rect x="16" y="329" width="1" height="1" fill="#808080"/><rect x="16" y="319" width="1" height="1" fill="#808080"/><rect x="16" y="310" width="1" height="1" fill="#808080"/><rect x="15" y="300" width="2" height="1" fill="#7a7a7a"/><rect x="16" y="291" width="1" height="1" fill="#808080"/><rect x="16" y="282" width="1" height="1" fill="#808080"/><rect x="16" y="272" width="1" height="1" fill="#808080"/><rect x="16" y="263" width="1" height="1" fill="#808080"/><rect x="12" y="253" width="5" height="1" fill="#6a6a6a"/><text transform="translate(10.4,252.40) rotate(-90)" text-anchor="middle" font-family="Liberation Sans,sans-serif" font-size="8.6" fill="#8c8c8c">50</text><rect x="16" y="244" width="1" height="1" fill="#808080"/><rect x="16" y="234" width="1" height="1" fill="#808080"/><rect x="16" y="225" width="1" height="1" fill="#808080"/><rect x="16" y="216" width="1" height="1" fill="#808080"/><rect x="15" y="206" width="2" height="1" fill="#7a7a7a"/><rect x="16" y="197" width="1" height="1" fill="#808080"/><rect x="16" y="187" width="1" height="1" fill="#808080"/><rect x="16" y="178" width="1" height="1" fill="#808080"/><rect x="16" y="168" width="1" height="1" fill="#808080"/><rect x="12" y="159" width="5" height="1" fill="#6a6a6a"/><text transform="translate(10.4,158.40) rotate(-90)" text-anchor="middle" font-family="Liberation Sans,sans-serif" font-size="8.6" fill="#8c8c8c">100</text><rect x="16" y="149" width="1" height="1" fill="#808080"/><rect x="16" y="140" width="1" height="1" fill="#808080"/><rect x="16" y="131" width="1" height="1" fill="#808080"/><rect x="16" y="121" width="1" height="1" fill="#808080"/><rect x="15" y="112" width="2" height="1" fill="#7a7a7a"/><rect x="16" y="102" width="1" height="1" fill="#808080"/><rect x="16" y="93" width="1" height="1" fill="#808080"/><rect x="16" y="83" width="1" height="1" fill="#808080"/><rect x="16" y="74" width="1" height="1" fill="#808080"/><rect x="12" y="64" width="5" height="1" fill="#6a6a6a"/><text transform="translate(10.4,63.40) rotate(-90)" text-anchor="middle" font-family="Liberation Sans,sans-serif" font-size="8.6" fill="#8c8c8c">150</text><rect x="16" y="55" width="1" height="1" fill="#808080"/><rect x="16" y="46" width="1" height="1" fill="#808080"/><rect x="16" y="36" width="1" height="1" fill="#808080"/><rect x="16" y="27" width="1" height="1" fill="#808080"/><rect x="15" y="17" width="2" height="1" fill="#7a7a7a"/><rect x="16" y="8" width="1" height="1" fill="#808080"/><text transform="translate(11,519.8) rotate(-90)" font-family="Liberation Sans,sans-serif" font-size="9.6" fill="#8c8c8c" textLength="47.6" lengthAdjust="spacingAndGlyphs">millimeters</text><path d="M2 255.5 H17" stroke="#000" stroke-width="1" stroke-dasharray="2.6 3.4"/></svg>
<div class="a" style="left:48px;top:151px;width:1275px;height:507px;background:#ffffff;"></div>
<div class="a" style="left:48px;top:151px;width:1275px;height:1px;background:#8c8c8c;"></div>
<div class="a" style="left:48px;top:151px;width:1px;height:523px;background:#8c8c8c;"></div>
<!-- sec_art -->
<svg class="a" style="left:0;top:0" width="1366" height="727" viewBox="0 0 1366 727"><path d="M394 297.2 C403 298.6 410 300 415.1 301.7 C424 305 432 309.6 438.2 314.7 C447 321.6 454.6 328 459.9 334.9 C466 343 469.6 350.4 471.4 358 C474 366 475.6 372 475.7 378.2 C475.6 386 474.6 396 473.4 404.4 C475.8 397 478.2 388 479.5 379.4 C483 384.6 485 390 485.8 395.5 C487.6 401 488.6 407 488.7 412.9 C488.8 419 487.6 425 485.8 430.2 C483.6 438 480.6 444.6 475.7 450.4 C470.4 457.6 463.6 463.4 455.5 467.7 C447 472.6 437 475.6 426.6 476 C416 476.2 406.6 474.6 397.8 470.6 C388.6 467 380.8 461.6 374.7 454.7 C369 448.6 365.4 441.4 363.1 433.1 C361 427 359.8 421.6 359.6 415.7 C359.8 408.6 360.8 401.6 363.1 395.5 C365.6 388 369.6 381.4 374.7 375.3 C379.4 369.6 384.2 365.4 389.1 360.9 C392.4 357.8 395.4 354.6 397.8 350.8 C400 347.6 401.8 344.2 402.1 340.6 C402.2 338.8 401.2 337 400.1 335.6 C402 337.4 403.4 339.6 404.1 342.1 C405.2 345.4 405.8 348.8 405.8 352.2 C405.9 354.8 405.7 357 405.3 359.4 C407.4 354 408.8 349 409.3 343.5 C410 338 409.8 332 408.7 326.2 C407.8 320.6 406 315.2 403.5 310.3 C401 305.4 398 301 394 297.2 Z" fill="#00ffff"/><path d="M561 319.5 H644.6 Q647.6 319.5 647.6 322.5 V352.6 Q647.6 355.6 644.6 355.6 H600.2 V379.6 H623.6 Q626.6 379.6 626.6 382.6 V412.6 Q626.6 415.6 623.6 415.6 H600.2 V473.4 Q600.2 476.4 597.2 476.4 H561 Q558 476.4 558 473.4 V322.5 Q558 319.5 561 319.5 Z" fill="#00ffff"/><rect x="677" y="319.5" width="42.2" height="156.9" rx="3" fill="#00ffff"/><path d="M756 319.5 H806 C832 319.5 850 336 850 366 C850 394 842 406 834 411 L852 476.4 H811.4 L796.6 416 Q795.6 413 795.6 416 V473.4 Q795.6 476.4 792.6 476.4 H756 Q753 476.4 753 473.4 V322.5 Q753 319.5 756 319.5 Z M798.2 355.7 Q795.6 355.7 795.6 358.3 V381.4 Q795.6 384 798.2 384 H803 C808.6 384 811 378.6 811 369.8 C811 361 808.6 355.7 803 355.7 Z" fill="#00ffff" fill-rule="evenodd"/><path d="M398.3 350.2 L472.3 453.9" stroke="#1a1a1a" stroke-width="1"/><path d="M459.9 336.3 L374.7 455.3" stroke="#1a1a1a" stroke-width="1"/><path d="M558.4 319.8 L647.6 352.8" stroke="#1a1a1a" stroke-width="1"/><path d="M558.8 476 L600.1 460.2" stroke="#1a1a1a" stroke-width="1"/><path d="M677 364 L719.2 379.9" stroke="#1a1a1a" stroke-width="1"/><path d="M677 431.3 L719.2 415.1" stroke="#1a1a1a" stroke-width="1"/><path d="M753 393.5 L830 421.3" stroke="#1a1a1a" stroke-width="1"/><path d="M753 402.7 L830 374.6" stroke="#1a1a1a" stroke-width="1"/><rect x="348.0" y="285.0" width="6.8" height="6.8" fill="#000"/><rect x="348.0" y="382.4" width="6.8" height="6.8" fill="#000"/><rect x="348.0" y="479.0" width="6.8" height="6.8" fill="#000"/><rect x="663.2" y="285.0" width="6.8" height="6.8" fill="#000"/><rect x="663.2" y="479.0" width="6.8" height="6.8" fill="#000"/><path d="M663.8 383.2 L670.8 390.2 M670.8 383.2 L663.8 390.2" stroke="#000" stroke-width="1.7"/><rect x="401.6" y="312.2" width="5" height="5" fill="#fff" stroke="#000" stroke-width="1"/><path d="M406.6 312.2 V317.2" stroke="#c8141c" stroke-width="1"/><rect x="550.2" y="474.2" width="3.2" height="3.2" fill="#fff" stroke="#000" stroke-width="1"/><rect x="669.5" y="474.2" width="3.2" height="3.2" fill="#fff" stroke="#000" stroke-width="1"/><rect x="745.2" y="474.2" width="3.2" height="3.2" fill="#fff" stroke="#000" stroke-width="1"/></svg>
<!-- sec_right -->
<div class="a" style="left:1306px;top:152px;width:17px;height:17px;background:#f0f0f0;"></div>
<svg class="a" style="left:1309.4px;top:158px;" width="8.4" height="6.4" viewBox="0 0 8.4 6.4"><path d="M0.8 5.4 L4.2 1.6 L7.6 5.4" fill="none" stroke="#404040" stroke-width="2"/></svg>
<div class="a" style="left:1306px;top:328px;width:15px;height:264px;background:#cdcdcd;"></div>
<div class="a" style="left:1306px;top:640px;width:17px;height:17px;background:#f0f0f0;"></div>
<svg class="a" style="left:1309.4px;top:645.6px;" width="8.4" height="6.4" viewBox="0 0 8.4 6.4"><path d="M0.8 1 L4.2 4.8 L7.6 1" fill="none" stroke="#404040" stroke-width="2"/></svg>
<div class="a" style="left:1323px;top:113px;width:5px;height:582px;background:#f4f4f4;"></div>
<div class="a" style="left:1325px;top:115px;width:1px;height:580px;background:#b8b8b8;"></div>
<div class="a" style="left:1326px;top:115px;width:2px;height:580px;background:#ffffff;"></div>
<div class="a" style="left:1328px;top:113px;width:19px;height:20px;background:#f0f0f0;"></div>
<div class="a" style="left:1328px;top:133px;width:19.6px;height:562px;background:#e9e9e9;"></div>
<div class="a" style="left:1328px;top:133px;width:19.6px;height:118px;background:#dcdcdc;"></div>
<div class="a" style="left:1328px;top:252px;width:19.6px;height:130px;background:#dcdcdc;"></div>
<div class="a" style="left:1328px;top:383px;width:19.6px;height:25px;background:#dcdcdc;"></div>
<div class="a" style="left:1328px;top:558px;width:19.6px;height:24px;background:#dcdcdc;"></div>
<svg class="a" style="left:1333.4px;top:118.6px;" width="8.6" height="8.6" viewBox="0 0 8.6 8.6"><path d="M0.6 0.6 L8 8 M8 0.6 L0.6 8" stroke="#a6a6a6" stroke-width="1.1"/></svg>
<div class="a" style="left:1347px;top:113px;width:19px;height:582px;background:#f4f4f4;"></div>
<svg class="a" style="left:1351px;top:117.4px;" width="12" height="2" viewBox="0 0 12 2"><rect x="0.0" y="0" width="1.6" height="1.2" fill="#b8b8b8"/><rect x="3.4" y="0" width="1.6" height="1.2" fill="#b8b8b8"/><rect x="6.8" y="0" width="1.6" height="1.2" fill="#b8b8b8"/><rect x="10.2" y="0" width="1.6" height="1.2" fill="#b8b8b8"/></svg>
<svg class="a" style="left:1353.8px;top:123px;" width="6" height="9.4" viewBox="0 0 6 9.4"><path d="M0 0 L5.6 4.6 L0 9.2 Z" fill="#000"/></svg>
<svg class="a" style="left:1350.6px;top:136.6px;" width="13" height="13" viewBox="0 0 13 13"><path d="M1.4 11.6 L6.6 6.2" stroke="#5fa39c" stroke-width="2.2"/><path d="M0.4 12.6 L2 11" stroke="#2f5f5a" stroke-width="1"/><path d="M6.4 6.6 L10 3" stroke="#26253a" stroke-width="3" stroke-linecap="round"/><path d="M5 4.4 L8.6 8" stroke="#26253a" stroke-width="1.5"/><circle cx="10.8" cy="2.2" r="2" fill="#26253a"/></svg>
<svg class="a" style="left:1351.6px;top:154px;" width="10" height="7" viewBox="0 0 10 7"><path d="M0.6 6 L5 1.4 L9.4 6" fill="none" stroke="#c9ced8" stroke-width="1.4"/></svg>
<div class="a" style="left:1348px;top:167.4px;width:18px;height:485.8px;background:#3a3a3a;"></div>
<svg class="a" style="left:1348px;top:167.4px;" width="18" height="17.0" viewBox="0 0 18 17.0"><rect x="0.5" y="0.5" width="17" height="16.00" fill="#fff" stroke="#222" stroke-width="1"/><path d="M1 1 L17 16.00 M17 1 L1 16.00" stroke="#222" stroke-width="1"/></svg>
<div class="a" style="left:1349px;top:184.9px;width:16.4px;height:16.5px;background:#000000;"></div>
<div class="a" style="left:1349px;top:201.9px;width:16.4px;height:16.5px;background:#1a1a1a;"></div>
<div class="a" style="left:1349px;top:218.9px;width:16.4px;height:16.5px;background:#333333;"></div>
<div class="a" style="left:1349px;top:235.9px;width:16.4px;height:16.5px;background:#4d4d4d;"></div>
<div class="a" style="left:1349px;top:252.9px;width:16.4px;height:16.5px;background:#666666;"></div>
<div class="a" style="left:1349px;top:269.9px;width:16.4px;height:16.5px;background:#808080;"></div>
<div class="a" style="left:1349px;top:286.9px;width:16.4px;height:16.5px;background:#999999;"></div>
<div class="a" style="left:1349px;top:303.9px;width:16.4px;height:16.5px;background:#b3b3b3;"></div>
<div class="a" style="left:1349px;top:320.9px;width:16.4px;height:16.5px;background:#cccccc;"></div>
<div class="a" style="left:1349px;top:337.9px;width:16.4px;height:16.5px;background:#e6e6e6;"></div>
<div class="a" style="left:1349px;top:354.9px;width:16.4px;height:16.5px;background:#ffffff;"></div>
<div class="a" style="left:1349px;top:371.9px;width:16.4px;height:16.5px;background:#0000ff;"></div>
<div class="a" style="left:1348px;top:388.4px;width:18px;height:17.0px;background:#ffffff;"></div>
<div class="a" style="left:1349px;top:389.4px;width:16px;height:15.0px;background:#00ffff;"></div>
<div class="a" style="left:1349px;top:405.9px;width:16.4px;height:16.5px;background:#00ff00;"></div>
<div class="a" style="left:1349px;top:422.9px;width:16.4px;height:16.5px;background:#ffff00;"></div>
<div class="a" style="left:1349px;top:439.9px;width:16.4px;height:16.5px;background:#ff0000;"></div>
<div class="a" style="left:1349px;top:456.9px;width:16.4px;height:16.5px;background:#ff00ff;"></div>
<div class="a" style="left:1349px;top:473.9px;width:16.4px;height:16.5px;background:#9900cc;"></div>
<div class="a" style="left:1349px;top:490.9px;width:16.4px;height:16.5px;background:#ff6600;"></div>
<div class="a" style="left:1349px;top:507.9px;width:16.4px;height:16.5px;background:#ff99cc;"></div>
<div class="a" style="left:1349px;top:524.9px;width:16.4px;height:16.5px;background:#663333;"></div>
<div class="a" style="left:1349px;top:541.9px;width:16.4px;height:16.5px;background:#ccccff;"></div>
<div class="a" style="left:1349px;top:558.9px;width:16.4px;height:16.5px;background:#9999ff;"></div>
<div class="a" style="left:1349px;top:575.9px;width:16.4px;height:16.5px;background:#6699ff;"></div>
<div class="a" style="left:1349px;top:592.9px;width:16.4px;height:16.5px;background:#6666ff;"></div>
<div class="a" style="left:1349px;top:609.9px;width:16.4px;height:16.5px;background:#6666cc;"></div>
<div class="a" style="left:1349px;top:626.9px;width:16.4px;height:16.5px;background:#003399;"></div>
<div class="a" style="left:1349px;top:643.9px;width:16.4px;height:9.3px;background:#000066;"></div>
<svg class="a" style="left:1352px;top:657.4px;" width="9.4" height="7" viewBox="0 0 9.4 7"><path d="M0.6 0.8 L4.7 5.8 L8.8 0.8" fill="none" stroke="#b4bac6" stroke-width="1.4"/></svg>
<svg class="a" style="left:1352.6px;top:675px;" width="8.6" height="7.6" viewBox="0 0 8.6 7.6"><path d="M0.6 0.4 L3.8 3.8 L0.6 7.2 M4.4 0.4 L7.6 3.8 L4.4 7.2" fill="none" stroke="#aeb4c0" stroke-width="1.1"/></svg>
<svg class="a" style="left:1330px;top:135.5px;" width="16" height="16" viewBox="0 0 16 16"><text x="7.6" y="14.2" text-anchor="middle" font-family="Liberation Sans,sans-serif" font-weight="bold" font-size="15.5" fill="#e6e7f3" stroke="#4d4f76" stroke-width="0.9">A</text><path d="M0.6 2.6 H3.6 M11.6 2.6 H14.6" stroke="#333" stroke-width="0.8"/><path d="M0 2.6 L1.8 1.2 V4 Z M15.2 2.6 L13.4 1.2 V4 Z" fill="#333"/></svg>
<span class="t" style="left:1332.68px;top:158.80px;font-size:12px;color:#000;letter-spacing:-0.349px;transform-origin:0 0;transform:rotate(90deg) translate(0,-10.16px);">Text Properties</span>
<svg class="a" style="left:1329px;top:257px;" width="16" height="16" viewBox="0 0 16 16"><path d="M8.6 12 A4.4 4.4 0 1 1 8.2 3.6" fill="none" stroke="#55577c" stroke-width="1.3"/><path d="M5.6 14 L9.8 11.8 L6 9.8 Z" fill="#55577c"/><path d="M10.6 1 V8 M7 4.4 H14.2" stroke="#333" stroke-width="1"/><path d="M10.6 0 L12 2 H9.2 Z M10.6 9 L12 7 H9.2 Z M6 4.4 L8 3 V5.8 Z M15.2 4.4 L13.2 3 V5.8 Z" fill="#333"/></svg>
<span class="t" style="left:1332.68px;top:278.40px;font-size:12px;color:#000;letter-spacing:-0.137px;transform-origin:0 0;transform:rotate(90deg) translate(0,-10.16px);">Transformations</span>
<svg class="a" style="left:1330px;top:387px;" width="15" height="15" viewBox="0 0 15 15"><circle cx="1.6" cy="1.6" r="1.2" fill="#fff" stroke="#55577c" stroke-width="0.8"/><path d="M1.6 3 V13 M3 1.6 H5 M5 8 H7 M5 13 H11" fill="none" stroke="#444" stroke-width="0.9" stroke-dasharray="1 1"/><rect x="5" y="0.6" width="4.4" height="4" fill="#a9abc8" stroke="#55577c" stroke-width="0.8"/><rect x="10" y="2.6" width="3" height="3" fill="#dfe1f0" stroke="#55577c" stroke-width="0.8"/><rect x="7" y="5.6" width="4" height="4.6" fill="#e8e9f4" stroke="#8d8fb0" stroke-width="0.8"/><rect x="10.6" y="6.4" width="3.8" height="4.4" fill="#8d8fb0" stroke="#55577c" stroke-width="0.8"/><circle cx="12.4" cy="13" r="1.4" fill="#fff" stroke="#55577c" stroke-width="0.8"/></svg>
<div class="a" style="left:1328px;top:408.5px;width:19.6px;height:147.5px;background:#cce4f7;"></div>
<svg class="a" style="left:1330.5px;top:412.5px;" width="14" height="15" viewBox="0 0 14 15"><defs><linearGradient id="ag" x1="0" y1="0" x2="0" y2="1"><stop offset="0" stop-color="#fff"/><stop offset="1" stop-color="#a9abc0"/></linearGradient></defs><path d="M0.8 0.4 V14.4" stroke="#222" stroke-width="1" stroke-dasharray="1 1"/><rect x="2.8" y="3.2" width="10.4" height="4.8" fill="url(#ag)" stroke="#6b6d8a" stroke-width="0.8"/><rect x="2.8" y="9.2" width="7" height="4.2" fill="url(#ag)" stroke="#6b6d8a" stroke-width="0.8"/></svg>
<span class="t" style="left:1332.68px;top:432.60px;font-size:12px;color:#000;letter-spacing:0.107px;transform-origin:0 0;transform:rotate(90deg) translate(0,-10.16px);">Align and Distribute</span>
<svg class="a" style="left:1329.5px;top:562px;" width="15" height="15" viewBox="0 0 15 15"><path d="M2.6 11 V6.6 C2.6 0.6 12.4 0.6 12.4 6.6 V11" fill="none" stroke="#6aa0c8" stroke-width="1.5"/><rect x="1.2" y="7.6" width="3" height="5.4" rx="1" fill="#fff" stroke="#444" stroke-width="0.9"/><rect x="10.8" y="7.6" width="3" height="5.4" rx="1" fill="#fff" stroke="#444" stroke-width="0.9"/></svg>
<svg class="a" style="left:1328.5px;top:600px;" width="17" height="17" viewBox="0 0 17 17"><circle cx="8.5" cy="8.5" r="7.5" fill="none" stroke="#b8b8b8" stroke-width="1.2"/><path d="M8.5 4.2 V12.8 M4.2 8.5 H12.8" stroke="#b8b8b8" stroke-width="1.4"/></svg>
<!-- sec_bottom -->
<div class="a" style="left:49px;top:658px;width:637px;height:17px;background:#f4f4f4;"></div>
<div class="a" style="left:48px;top:657px;width:639px;height:1px;background:#8c8c8c;"></div>
<svg class="a" style="left:52px;top:659px;" width="10" height="12" viewBox="0 0 10 12"><path d="M0.6 0.6 H6 L9 3.6 V11.4 H0.6 Z" fill="#fff" stroke="#111" stroke-width="1.1"/><path d="M6 0.6 V3.6 H9" fill="none" stroke="#111" stroke-width="0.9"/><path d="M4.8 5 V10 M2.3 7.5 H7.3" stroke="#111" stroke-width="1.3"/></svg>
<svg class="a" style="left:69.6px;top:660.6px;" width="8" height="10" viewBox="0 0 8 10"><path d="M0.6 0 V9.4" stroke="#8a8a8a" stroke-width="1.2"/><path d="M7.6 0 V9.4 L2 4.7 Z" fill="#8a8a8a"/></svg>
<svg class="a" style="left:88.4px;top:660.6px;" width="7" height="10" viewBox="0 0 7 10"><path d="M6 0 V9.4 L0.4 4.7 Z" fill="#8a8a8a"/></svg>
<span class="t" style="left:115.80px;top:661.00px;font-size:12px;color:#000;letter-spacing:-0.504px;">1 of 1</span>
<svg class="a" style="left:167px;top:660.6px;" width="7" height="10" viewBox="0 0 7 10"><path d="M0.4 0 V9.4 L6 4.7 Z" fill="#8a8a8a"/></svg>
<svg class="a" style="left:181.6px;top:660.6px;" width="8" height="10" viewBox="0 0 8 10"><path d="M7 0 V9.4" stroke="#8a8a8a" stroke-width="1.2"/><path d="M0 0 V9.4 L5.6 4.7 Z" fill="#8a8a8a"/></svg>
<svg class="a" style="left:197.6px;top:659px;" width="10" height="12" viewBox="0 0 10 12"><path d="M0.6 0.6 H6 L9 3.6 V11.4 H0.6 Z" fill="#fff" stroke="#111" stroke-width="1.1"/><path d="M6 0.6 V3.6 H9" fill="none" stroke="#111" stroke-width="0.9"/><path d="M4.8 5 V10 M2.3 7.5 H7.3" stroke="#111" stroke-width="1.3"/></svg>
<svg class="a" style="left:212px;top:657.5px;" width="68" height="17.5" viewBox="0 0 68 17.5"><path d="M0.5 0 V17 H66.4 V9 L58.4 0 Z" fill="#fff" stroke="#a8a8a8" stroke-width="1"/></svg>
<span class="t" style="left:227.40px;top:659.00px;font-size:12px;color:#000;letter-spacing:-0.672px;">Page 1</span>
<div class="a" style="left:686px;top:657px;width:1px;height:17px;background:#707070;"></div>
<svg class="a" style="left:681px;top:662px;" width="3" height="12" viewBox="0 0 3 12"><rect x="0" y="0" width="1.6" height="1.6" fill="#b5b5b5"/><rect x="0" y="4" width="1.6" height="1.6" fill="#b5b5b5"/><rect x="0" y="8" width="1.6" height="1.6" fill="#b5b5b5"/></svg>
<div class="a" style="left:687px;top:658px;width:620px;height:16px;background:#ffffff;"></div>
<div class="a" style="left:687px;top:658px;width:17px;height:16px;background:#f0f0f0;"></div>
<svg class="a" style="left:692px;top:662px;" width="6.4" height="8" viewBox="0 0 6.4 8"><path d="M5.4 0.6 L1.6 3.9 L5.4 7.2" fill="none" stroke="#404040" stroke-width="2"/></svg>
<div class="a" style="left:705px;top:658px;width:130px;height:15.4px;background:#cdcdcd;"></div>
<div class="a" style="left:1288px;top:658px;width:17px;height:16px;background:#f0f0f0;"></div>
<svg class="a" style="left:1294px;top:661.6px;" width="6.4" height="8" viewBox="0 0 6.4 8"><path d="M1 0.6 L4.8 3.9 L1 7.2" fill="none" stroke="#404040" stroke-width="2"/></svg>
<svg class="a" style="left:1308px;top:661px;" width="13" height="12.4" viewBox="0 0 13 12.4"><circle cx="5.6" cy="5.4" r="4.6" fill="#fff" stroke="#34365c" stroke-width="1.2"/><circle cx="5.6" cy="5.4" r="2" fill="none" stroke="#34365c" stroke-width="0.8"/><path d="M5.6 1 V9.8 M1.2 5.4 H10" stroke="#34365c" stroke-width="0.7"/><path d="M9 8.8 L12.4 12" stroke="#222" stroke-width="1.9"/></svg>
<div class="a" style="left:30px;top:674px;width:1293px;height:1px;background:#f4f4f4;"></div>
<div class="a" style="left:30px;top:675px;width:1293px;height:1px;background:#d9d9d9;"></div>
<div class="a" style="left:30px;top:676px;width:1293px;height:18px;background:#f4f4f4;"></div>
<svg class="a" style="left:34.4px;top:678.4px;" width="3" height="16" viewBox="0 0 3 16"><rect x="0" y="0" width="1.6" height="1.6" fill="#b5b5b5"/><rect x="0" y="4" width="1.6" height="1.6" fill="#b5b5b5"/><rect x="0" y="8" width="1.6" height="1.6" fill="#b5b5b5"/><rect x="0" y="12" width="1.6" height="1.6" fill="#b5b5b5"/></svg>
<svg class="a" style="left:41.8px;top:680px;" width="6" height="10" viewBox="0 0 6 10"><path d="M0 0 L5.6 4.8 L0 9.6 Z" fill="#000"/></svg>
<svg class="a" style="left:53px;top:678.6px;" width="14" height="13" viewBox="0 0 14 13"><path d="M1.6 12 L7 6.4" stroke="#6fb3ad" stroke-width="2.2"/><path d="M0.6 12.8 L2 11.4" stroke="#333" stroke-width="1"/><path d="M6.6 7 L10.4 3.2" stroke="#26253a" stroke-width="3" stroke-linecap="round"/><path d="M5.4 4.6 L9 8.2" stroke="#26253a" stroke-width="1.4"/><circle cx="11.2" cy="2.4" r="2" fill="#26253a"/></svg>
<svg class="a" style="left:70.4px;top:680px;" width="9" height="10" viewBox="0 0 9 10"><path d="M7.8 0.6 L1 4.8 L7.8 9" fill="none" stroke="#c4c4c4" stroke-width="1.3"/></svg>
<svg class="a" style="left:84.4px;top:676.2px;" width="86" height="17.4" viewBox="0 0 86 17.4"><rect x="17" y="0.5" width="17" height="16.4" fill="#ffff00"/><rect x="34" y="0.5" width="17" height="16.4" fill="#ff0000"/><rect x="51" y="0.5" width="17" height="16.4" fill="#00ffff"/><rect x="68" y="0.5" width="17" height="16.4" fill="#fff"/><path d="M34.5 0.5 V17 M51.5 0.5 V17 M68.5 0.5 V17" stroke="#555" stroke-width="1" opacity="0.75"/><rect x="0.5" y="0.5" width="84.8" height="16.4" fill="none" stroke="#555" stroke-width="1"/><rect x="0.5" y="0.5" width="16.8" height="16.4" fill="#fff" stroke="#333" stroke-width="1"/><path d="M1 1 L17 16.6 M17 1 L1 16.6" stroke="#222" stroke-width="1"/></svg>
<svg class="a" style="left:1286px;top:679.6px;" width="8" height="10" viewBox="0 0 8 10"><path d="M0.8 0.6 L7 4.8 L0.8 9" fill="none" stroke="#c9c9c9" stroke-width="1.3"/></svg>
<svg class="a" style="left:1303.6px;top:680.6px;" width="9" height="8" viewBox="0 0 9 8"><path d="M0.6 0.6 L3.8 4 L0.6 7.4 M4.8 0.6 L8 4 L4.8 7.4" fill="none" stroke="#b5b5b5" stroke-width="1"/></svg>
<div class="a" style="left:0px;top:694px;width:1366px;height:1px;background:#d6d6d6;"></div>
<div class="a" style="left:0px;top:695px;width:1366px;height:32px;background:#f4f4f4;"></div>
<span class="t" style="left:5.60px;top:706.00px;font-size:12px;color:#000;letter-spacing:-0.470px;">( -315,071; 48,617 )</span>
<svg class="a" style="left:110.8px;top:704px;" width="15" height="14.4" viewBox="0 0 15 14.4"><rect x="0.6" y="0.6" width="13.4" height="13" fill="#fff" stroke="#111" stroke-width="1.2"/><path d="M5 3.2 L10.4 7.1 L5 11 Z" fill="#000"/></svg>
<span class="t" style="left:158.60px;top:706.00px;font-size:12px;color:#000;letter-spacing:-0.153px;">PowerClip Group of 2 Objects on Layer 1</span>
<span class="t" style="left:1056.60px;top:706.00px;font-size:12px;color:#000;letter-spacing:-0.740px;">5 (#00FFFF)</span>
<div class="a" style="left:1144px;top:700px;width:1px;height:22px;background:#d0d0d0;"></div>
<svg class="a" style="left:1153.6px;top:704.4px;" width="10" height="15" viewBox="0 0 10 15"><path d="M4.6 0.6 C2.6 2.8 1 5.6 1.6 8.2 L2.8 10.6 H6.4 L7.6 8.2 C8.2 5.6 6.6 2.8 4.6 0.6 Z" fill="#fff" stroke="#2a2a4a" stroke-width="1"/><path d="M4.6 2 V6.4" stroke="#2a2a4a" stroke-width="0.8"/><circle cx="4.6" cy="7" r="0.9" fill="#2a2a4a"/><path d="M0.4 13 H8.8" stroke="#2a2a4a" stroke-width="1.6"/></svg>
<svg class="a" style="left:1171px;top:702px;" width="18.4" height="18" viewBox="0 0 18.4 18"><rect x="0.5" y="0.5" width="17.2" height="16.8" fill="#fff" stroke="#8f8f8f" stroke-width="1"/><path d="M1 1 L17.2 16.8" stroke="#e3141c" stroke-width="1.7"/></svg>
<span class="t" style="left:1192.40px;top:706.00px;font-size:12px;color:#000;letter-spacing:0.028px;">Outline Color</span>
<!-- sec_menu -->
<div class="a" style="left:827px;top:141px;width:229px;height:600px;background:#ffffff;border:1px solid #a0a0a0;"></div>
<div class="a" style="left:828px;top:142px;width:26px;height:590px;background:#f4f4f4;"></div>
<div class="a" style="left:828px;top:164px;width:227px;height:22px;background:#deedfa;border:1px solid #86bbeb;"></div>
<span class="t" style="left:864.20px;top:147.00px;font-size:12px;color:#a2a2a2;letter-spacing:-0.192px;"><u>P</u>owerClip Inside...</span>
<span class="t" style="left:864.20px;top:169.00px;font-size:12px;color:#000;letter-spacing:-0.381px;"><u>F</u>rame Type</span>
<svg class="a" style="left:1045px;top:171.2px;" width="5" height="8" viewBox="0 0 5 8"><path d="M0 0 L4.4 3.6 L0 7.2 Z" fill="#000"/></svg>
<div class="a" style="left:854px;top:189.4px;width:200px;height:1px;background:#d9d9d9;"></div>
<span class="t" style="left:864.20px;top:198.00px;font-size:12px;color:#000;letter-spacing:-0.119px;">E<u>x</u>tract Contents</span>
<span class="t" style="left:864.20px;top:220.00px;font-size:12px;color:#000;letter-spacing:-0.182px;"><u>E</u>dit PowerClip...</span>
<span class="t" style="left:864.20px;top:242.00px;font-size:12px;color:#000;letter-spacing:-0.075px;">Fit Contents</span>
<svg class="a" style="left:1045px;top:244.2px;" width="5" height="8" viewBox="0 0 5 8"><path d="M0 0 L4.4 3.6 L0 7.2 Z" fill="#000"/></svg>
<span class="t" style="left:864.20px;top:264.00px;font-size:12px;color:#000;letter-spacing:-0.057px;">Loc<u>k</u> Contents to PowerClip</span>
<span class="t" style="left:864.20px;top:286.00px;font-size:12px;color:#000;letter-spacing:-0.124px;">Con<u>v</u>ert to Curves</span>
<span class="t" style="left:999.60px;top:286.00px;font-size:12px;color:#000;letter-spacing:0.133px;">Ctrl+Q</span>
<span class="t" style="left:864.20px;top:308.00px;font-size:12px;color:#000;letter-spacing:-0.030px;"><u>U</u>ngroup Objects</span>
<span class="t" style="left:999.60px;top:308.00px;font-size:12px;color:#000;letter-spacing:0.144px;">Ctrl+U</span>
<span class="t" style="left:864.20px;top:330.00px;font-size:12px;color:#000;letter-spacing:0.018px;">U<u>n</u>group All Objects</span>
<span class="t" style="left:864.20px;top:352.00px;font-size:12px;color:#000;letter-spacing:-0.250px;"><u>W</u>rap Paragraph Text</span>
<span class="t" style="left:864.20px;top:374.00px;font-size:12px;color:#000;letter-spacing:-0.104px;">Wrap Connector Line</span>
<div class="a" style="left:854px;top:393.3px;width:200px;height:1px;background:#d9d9d9;"></div>
<span class="t" style="left:864.20px;top:403.00px;font-size:12px;color:#000;letter-spacing:-0.174px;"><u>U</u>ndo Delete</span>
<span class="t" style="left:1001.20px;top:403.00px;font-size:12px;color:#000;letter-spacing:0.067px;">Ctrl+Z</span>
<span class="t" style="left:864.20px;top:425.00px;font-size:12px;color:#000;letter-spacing:-0.091px;">Cu<u>t</u></span>
<span class="t" style="left:1001.00px;top:425.00px;font-size:12px;color:#000;letter-spacing:-0.013px;">Ctrl+X</span>
<span class="t" style="left:864.20px;top:447.00px;font-size:12px;color:#000;letter-spacing:-0.104px;"><u>C</u>opy</span>
<span class="t" style="left:1000.70px;top:447.00px;font-size:12px;color:#000;letter-spacing:-0.073px;">Ctrl+C</span>
<span class="t" style="left:864.20px;top:469.00px;font-size:12px;color:#000;letter-spacing:-0.315px;">De<u>l</u>ete</span>
<span class="t" style="left:1002.40px;top:469.00px;font-size:12px;color:#000;letter-spacing:-0.348px;">Delete</span>
<span class="t" style="left:864.20px;top:491.00px;font-size:12px;color:#000;letter-spacing:-0.088px;"><u>L</u>ock Object</span>
<div class="a" style="left:854px;top:511.4px;width:200px;height:1px;background:#d9d9d9;"></div>
<span class="t" style="left:864.20px;top:520.00px;font-size:12px;color:#000;letter-spacing:-0.135px;"><u>O</u>rder</span>
<svg class="a" style="left:1045px;top:522.2px;" width="5" height="8" viewBox="0 0 5 8"><path d="M0 0 L4.4 3.6 L0 7.2 Z" fill="#000"/></svg>
<span class="t" style="left:864.20px;top:542.00px;font-size:12px;color:#000;letter-spacing:-0.238px;">Object <u>S</u>tyles</span>
<svg class="a" style="left:1045px;top:544.2px;" width="5" height="8" viewBox="0 0 5 8"><path d="M0 0 L4.4 3.6 L0 7.2 Z" fill="#000"/></svg>
<span class="t" style="left:864.20px;top:564.00px;font-size:12px;color:#000;letter-spacing:-0.257px;">Colo<u>r</u> Styles</span>
<svg class="a" style="left:1045px;top:566.2px;" width="5" height="8" viewBox="0 0 5 8"><path d="M0 0 L4.4 3.6 L0 7.2 Z" fill="#000"/></svg>
<span class="t" style="left:864.20px;top:586.00px;font-size:12px;color:#000;letter-spacing:-0.117px;">I<u>n</u>ternet Links</span>
<svg class="a" style="left:1045px;top:588.2px;" width="5" height="8" viewBox="0 0 5 8"><path d="M0 0 L4.4 3.6 L0 7.2 Z" fill="#000"/></svg>
<div class="a" style="left:854px;top:605.9px;width:200px;height:1px;background:#d9d9d9;"></div>
<span class="t" style="left:864.20px;top:615.00px;font-size:12px;color:#000;letter-spacing:-0.001px;">Overprint <u>F</u>ill</span>
<span class="t" style="left:864.20px;top:637.00px;font-size:12px;color:#a2a2a2;letter-spacing:0.053px;">Overprint <u>O</u>utline</span>
<span class="t" style="left:864.20px;top:659.00px;font-size:12px;color:#000;letter-spacing:0.131px;">Object <u>H</u>inting</span>
<div class="a" style="left:854px;top:679.1px;width:200px;height:1px;background:#d9d9d9;"></div>
<span class="t" style="left:864.20px;top:688.00px;font-size:12px;color:#000;letter-spacing:-0.148px;">Object Propert<u>i</u>es</span>
<span class="t" style="left:985.40px;top:688.00px;font-size:12px;color:#000;letter-spacing:-0.011px;">Alt+Enter</span>
<span class="t" style="left:864.20px;top:710.00px;font-size:12px;color:#000;letter-spacing:-0.036px;">S<u>y</u>mbol</span>
<svg class="a" style="left:1045px;top:712.2px;" width="5" height="8" viewBox="0 0 5 8"><path d="M0 0 L4.4 3.6 L0 7.2 Z" fill="#000"/></svg>
<svg class="a" style="left:832.5px;top:145.5px;" width="17" height="16" viewBox="0 0 17 16"><ellipse cx="7.6" cy="3.6" rx="5" ry="2.6" fill="#e6e6e6" stroke="#cfcfcf" stroke-width="1"/><rect x="1.6" y="7" width="12.6" height="7.6" fill="#e3e3e3" stroke="#c6c6c6" stroke-width="1.6"/><path d="M2.4 3.6 C0.8 5 0.8 8 2.6 9" fill="none" stroke="#c6c6c6" stroke-width="1.4"/></svg>
<svg class="a" style="left:832.5px;top:196.5px;" width="17" height="16" viewBox="0 0 17 16"><rect x="1" y="6.6" width="14" height="8" fill="#8d8fb0" stroke="#34365c" stroke-width="1.4"/><ellipse cx="8" cy="10.4" rx="4.4" ry="2.2" fill="#f4f4fa" stroke="#34365c" stroke-width="0.9"/><path d="M3.6 8.6 C1.4 6.4 2 3.4 4.8 1.8" fill="none" stroke="#222" stroke-width="1.3"/><path d="M3.4 0.6 L7.2 1.2 L4.8 4 Z" fill="#222"/></svg>
<svg class="a" style="left:833.5px;top:218px;" width="16" height="16" viewBox="0 0 16 16"><rect x="0.8" y="7" width="13.4" height="7.6" fill="#ececf4" stroke="#34365c" stroke-width="1.2"/><ellipse cx="7.4" cy="10.8" rx="4.2" ry="2" fill="#fff" stroke="#34365c" stroke-width="0.9"/><path d="M7 8 L12 2.2 L14.6 4.6 L9.6 10 Z" fill="#fff" stroke="#34365c" stroke-width="0.9"/><path d="M11.4 2.8 L12.6 1.2 L15.4 3.8 L14 5.2 Z" fill="#222"/></svg>
<div class="a" style="left:830px;top:259px;width:22.4px;height:22px;background:#91c9f7;"></div>
<svg class="a" style="left:835.5px;top:264.5px;" width="12" height="11" viewBox="0 0 12 11"><path d="M1 5.6 L4.4 9 L10.8 1.4" fill="none" stroke="#1d4f91" stroke-width="1.5"/></svg>
<svg class="a" style="left:832px;top:283px;" width="18" height="18" viewBox="0 0 18 18"><circle cx="9" cy="9" r="6.2" fill="none" stroke="#3b3d66" stroke-width="1.1"/><rect x="7.4" y="1.2" width="3.2" height="3.2" fill="#fff" stroke="#3b3d66" stroke-width="0.9"/><rect x="7.4" y="13.6" width="3.2" height="3.2" fill="#fff" stroke="#3b3d66" stroke-width="0.9"/><rect x="1.2" y="7.4" width="3.2" height="3.2" fill="#fff" stroke="#3b3d66" stroke-width="0.9"/><rect x="13.6" y="7.4" width="3.2" height="3.2" fill="#fff" stroke="#3b3d66" stroke-width="0.9"/></svg>
<svg class="a" style="left:833px;top:306px;" width="17" height="17" viewBox="0 0 17 17"><rect x="0.75" y="0.75" width="13.5" height="13.5" fill="none" stroke="#1c1c1c" stroke-width="1.5" stroke-dasharray="1.5 1.5"/><rect x="3.6" y="3.6" width="3.6" height="3.6" fill="#fff" stroke="#3b3d66" stroke-width="1"/><rect x="7.2" y="7.2" width="3.6" height="3.6" fill="#fff" stroke="#3b3d66" stroke-width="1"/><path d="M10 10.2 L15.8 15.8 M15.8 10.2 L10 15.8" stroke="#f0260a" stroke-width="1.8"/></svg>
<svg class="a" style="left:833px;top:327.5px;" width="17" height="17" viewBox="0 0 17 17"><rect x="0.8" y="3.2" width="12.4" height="12.4" fill="none" stroke="#b5b8d0" stroke-width="0.9" stroke-dasharray="1.4 1"/><rect x="3.2" y="5.6" width="5.4" height="5.4" fill="#fff" stroke="#3b3d66" stroke-width="1.1"/><rect x="6" y="8.4" width="5.4" height="5.4" fill="#fff" stroke="#3b3d66" stroke-width="1.1"/><path d="M12.2 0.4 L15.8 4 M15.8 0.4 L12.2 4" stroke="#e8220f" stroke-width="1.5"/></svg>
<svg class="a" style="left:833.6px;top:350.6px;" width="16" height="15" viewBox="0 0 16 15"><defs><linearGradient id="wg2" x1="0" y1="0" x2="1" y2="1"><stop offset="0" stop-color="#fff"/><stop offset="1" stop-color="#9fa3c8"/></linearGradient></defs><path d="M0.4 1 H14.4 M0.4 4 H3.4 M0.4 7 H3.4 M0.4 10 H3.4 M0.4 13.4 H14.4" stroke="#222" stroke-width="1.1"/><rect x="5" y="3" width="9" height="8.4" fill="url(#wg2)" stroke="#3b3d66" stroke-width="1.1"/></svg>
<div class="a" style="left:830px;top:369px;width:22.4px;height:21.6px;background:#91c9f7;"></div>
<svg class="a" style="left:835.5px;top:372.5px;" width="12" height="15" viewBox="0 0 12 15"><path d="M6.6 0.6 V3 M6.6 11.4 V14.4" stroke="#34365c" stroke-width="1"/><path d="M4.4 3 H8.6 V11.4 H4.4" fill="none" stroke="#34365c" stroke-width="1.1"/><rect x="1" y="5" width="4.8" height="4.8" fill="#f47b00" stroke="#c45a00" stroke-width="0.8"/></svg>
<svg class="a" style="left:833.6px;top:400.6px;" width="15.4" height="15.4" viewBox="0 0 16 16"><path d="M0.2 5.6 L6.2 0.2 V3.4 C11.5 3.4 15 6.2 15 10.2 C15 13.4 12.5 15.4 9.2 15.6 V13.6 C11 13.2 11.8 12 11.8 10.6 C11.8 8.6 10 7.8 6.2 7.8 V11 Z" fill="#46415a"/></svg>
<svg class="a" style="left:832.6px;top:424px;" width="17" height="14" viewBox="0 0 17 14"><circle cx="2.8" cy="2.6" r="2.1" fill="none" stroke="#5a5f98" stroke-width="1.2"/><circle cx="2.8" cy="9.8" r="2.1" fill="none" stroke="#5a5f98" stroke-width="1.2"/><path d="M4.6 3.8 L15.8 10.4 M4.6 8.6 L15.6 2.6" stroke="#4a4a4a" stroke-width="1.6" stroke-linecap="round"/></svg>
<svg class="a" style="left:834px;top:446.6px;" width="15" height="15" viewBox="0 0 15 15"><rect x="0.5" y="0.5" width="8" height="9.6" fill="#f4fbfa" stroke="#9ccbc6"/><path d="M2 3 H7 M2 5 H7 M2 7 H5" stroke="#9ccbc6" stroke-width="0.9"/><rect x="5.3" y="3.7" width="8" height="10" fill="#fff" stroke="#4d4f7e" stroke-width="1.2"/><path d="M7 7 H11.6 M7 9 H11.6 M7 11 H11.6" stroke="#3b3d66" stroke-width="1"/></svg>
<svg class="a" style="left:835px;top:467.6px;" width="13" height="16" viewBox="0 0 13 16"><path d="M0.4 3 H11.8" stroke="#3b3d66" stroke-width="1.3"/><path d="M4 2.6 V0.8 H8.2 V2.6" fill="none" stroke="#3b3d66" stroke-width="1.1"/><path d="M1.6 3.4 V14.4 H10.6 V3.4" fill="#fff" stroke="#3b3d66" stroke-width="1.2"/><path d="M4.6 6 V12 M7.6 6 V12" stroke="#3b3d66" stroke-width="1.1"/></svg>
<svg class="a" style="left:835.6px;top:490.6px;" width="11" height="13" viewBox="0 0 11 13"><path d="M2.6 6 V3.8 C2.6 0 8.2 0 8.2 3.8 V6" fill="none" stroke="#34365c" stroke-width="1.5"/><rect x="0.4" y="5.6" width="10" height="7" rx="0.8" fill="#3c3f7a"/><rect x="4.6" y="8" width="1.6" height="2.8" fill="#fff"/></svg>
<div class="a" style="left:1055px;top:164px;width:246px;height:75px;background:#ffffff;border:1px solid #a0a0a0;"></div>
<div class="a" style="left:1056px;top:165px;width:26px;height:73px;background:#f4f4f4;"></div>
<span class="t" style="left:1092.40px;top:170.00px;font-size:12px;color:#a2a2a2;letter-spacing:-0.200px;">C<u>r</u>eate Empty PowerClip Frame</span>
<span class="t" style="left:1092.40px;top:192.00px;font-size:12px;color:#a2a2a2;letter-spacing:-0.247px;"><u>C</u>reate Empty Text Frame</span>
<div class="a" style="left:1082px;top:212px;width:216px;height:1px;background:#d9d9d9;"></div>
<div class="a" style="left:1056px;top:216px;width:244.4px;height:22px;background:#deedfa;border:1px solid #86bbeb;"></div>
<span class="t" style="left:1092.40px;top:221.00px;font-size:12px;color:#000;letter-spacing:0.028px;"><u>N</u>one</span>
<svg class="a" style="left:1061px;top:168px;" width="17" height="16" viewBox="0 0 17 16"><rect x="0.6" y="0.6" width="15.2" height="14.6" fill="#e9e9e9" stroke="#c4c4c4" stroke-width="1.2"/><path d="M1 1 L15.4 14.8 M15.4 1 L1 14.8" stroke="#c4c4c4" stroke-width="1"/></svg>
<svg class="a" style="left:1061px;top:189.5px;" width="17" height="16" viewBox="0 0 17 16"><path d="M2 1 V10 M0.6 1 H3.4 M0.6 10 H3.4" stroke="#c0c0c0" stroke-width="1"/><rect x="4.6" y="6.6" width="11" height="8.4" fill="none" stroke="#cfcfcf" stroke-width="0.9" stroke-dasharray="1 1"/><text x="5.6" y="14" font-size="7.5" fill="#bdbdbd" font-family="Liberation Sans,sans-serif">ab</text></svg>
<svg class="a" style="left:1061px;top:220px;" width="17" height="16" viewBox="0 0 17 16"><rect x="0.6" y="0.6" width="15.2" height="14.6" fill="#f6f6fa" stroke="#55577c" stroke-width="1.2"/><path d="M1 1 L15.4 14.8 M15.4 1 L1 14.8" stroke="#55577c" stroke-width="1"/><path d="M11.6 0.2 L15.8 4.4 M15.8 0.2 L11.6 4.4" stroke="#e8220f" stroke-width="1.2"/></svg>
<div class="a" style="left:835px;top:162px;width:126.4px;height:30px;border:2px solid #e60f1c;"></div>
<div class="a" style="left:1049px;top:209px;width:153px;height:42px;border:2px solid #e60f1c;"></div>
<svg class="a" style="left:1297.7px;top:233.4px;" width="14" height="21" viewBox="0 0 14 21"><path d="M0.5 0.6 V17.3 L4.4 13.6 L6.9 19.3 L9.6 18.2 L7.2 12.8 L12.1 12.2 Z" fill="#fff" stroke="#101018" stroke-width="1" stroke-linejoin="miter"/></svg>
</body></html>
